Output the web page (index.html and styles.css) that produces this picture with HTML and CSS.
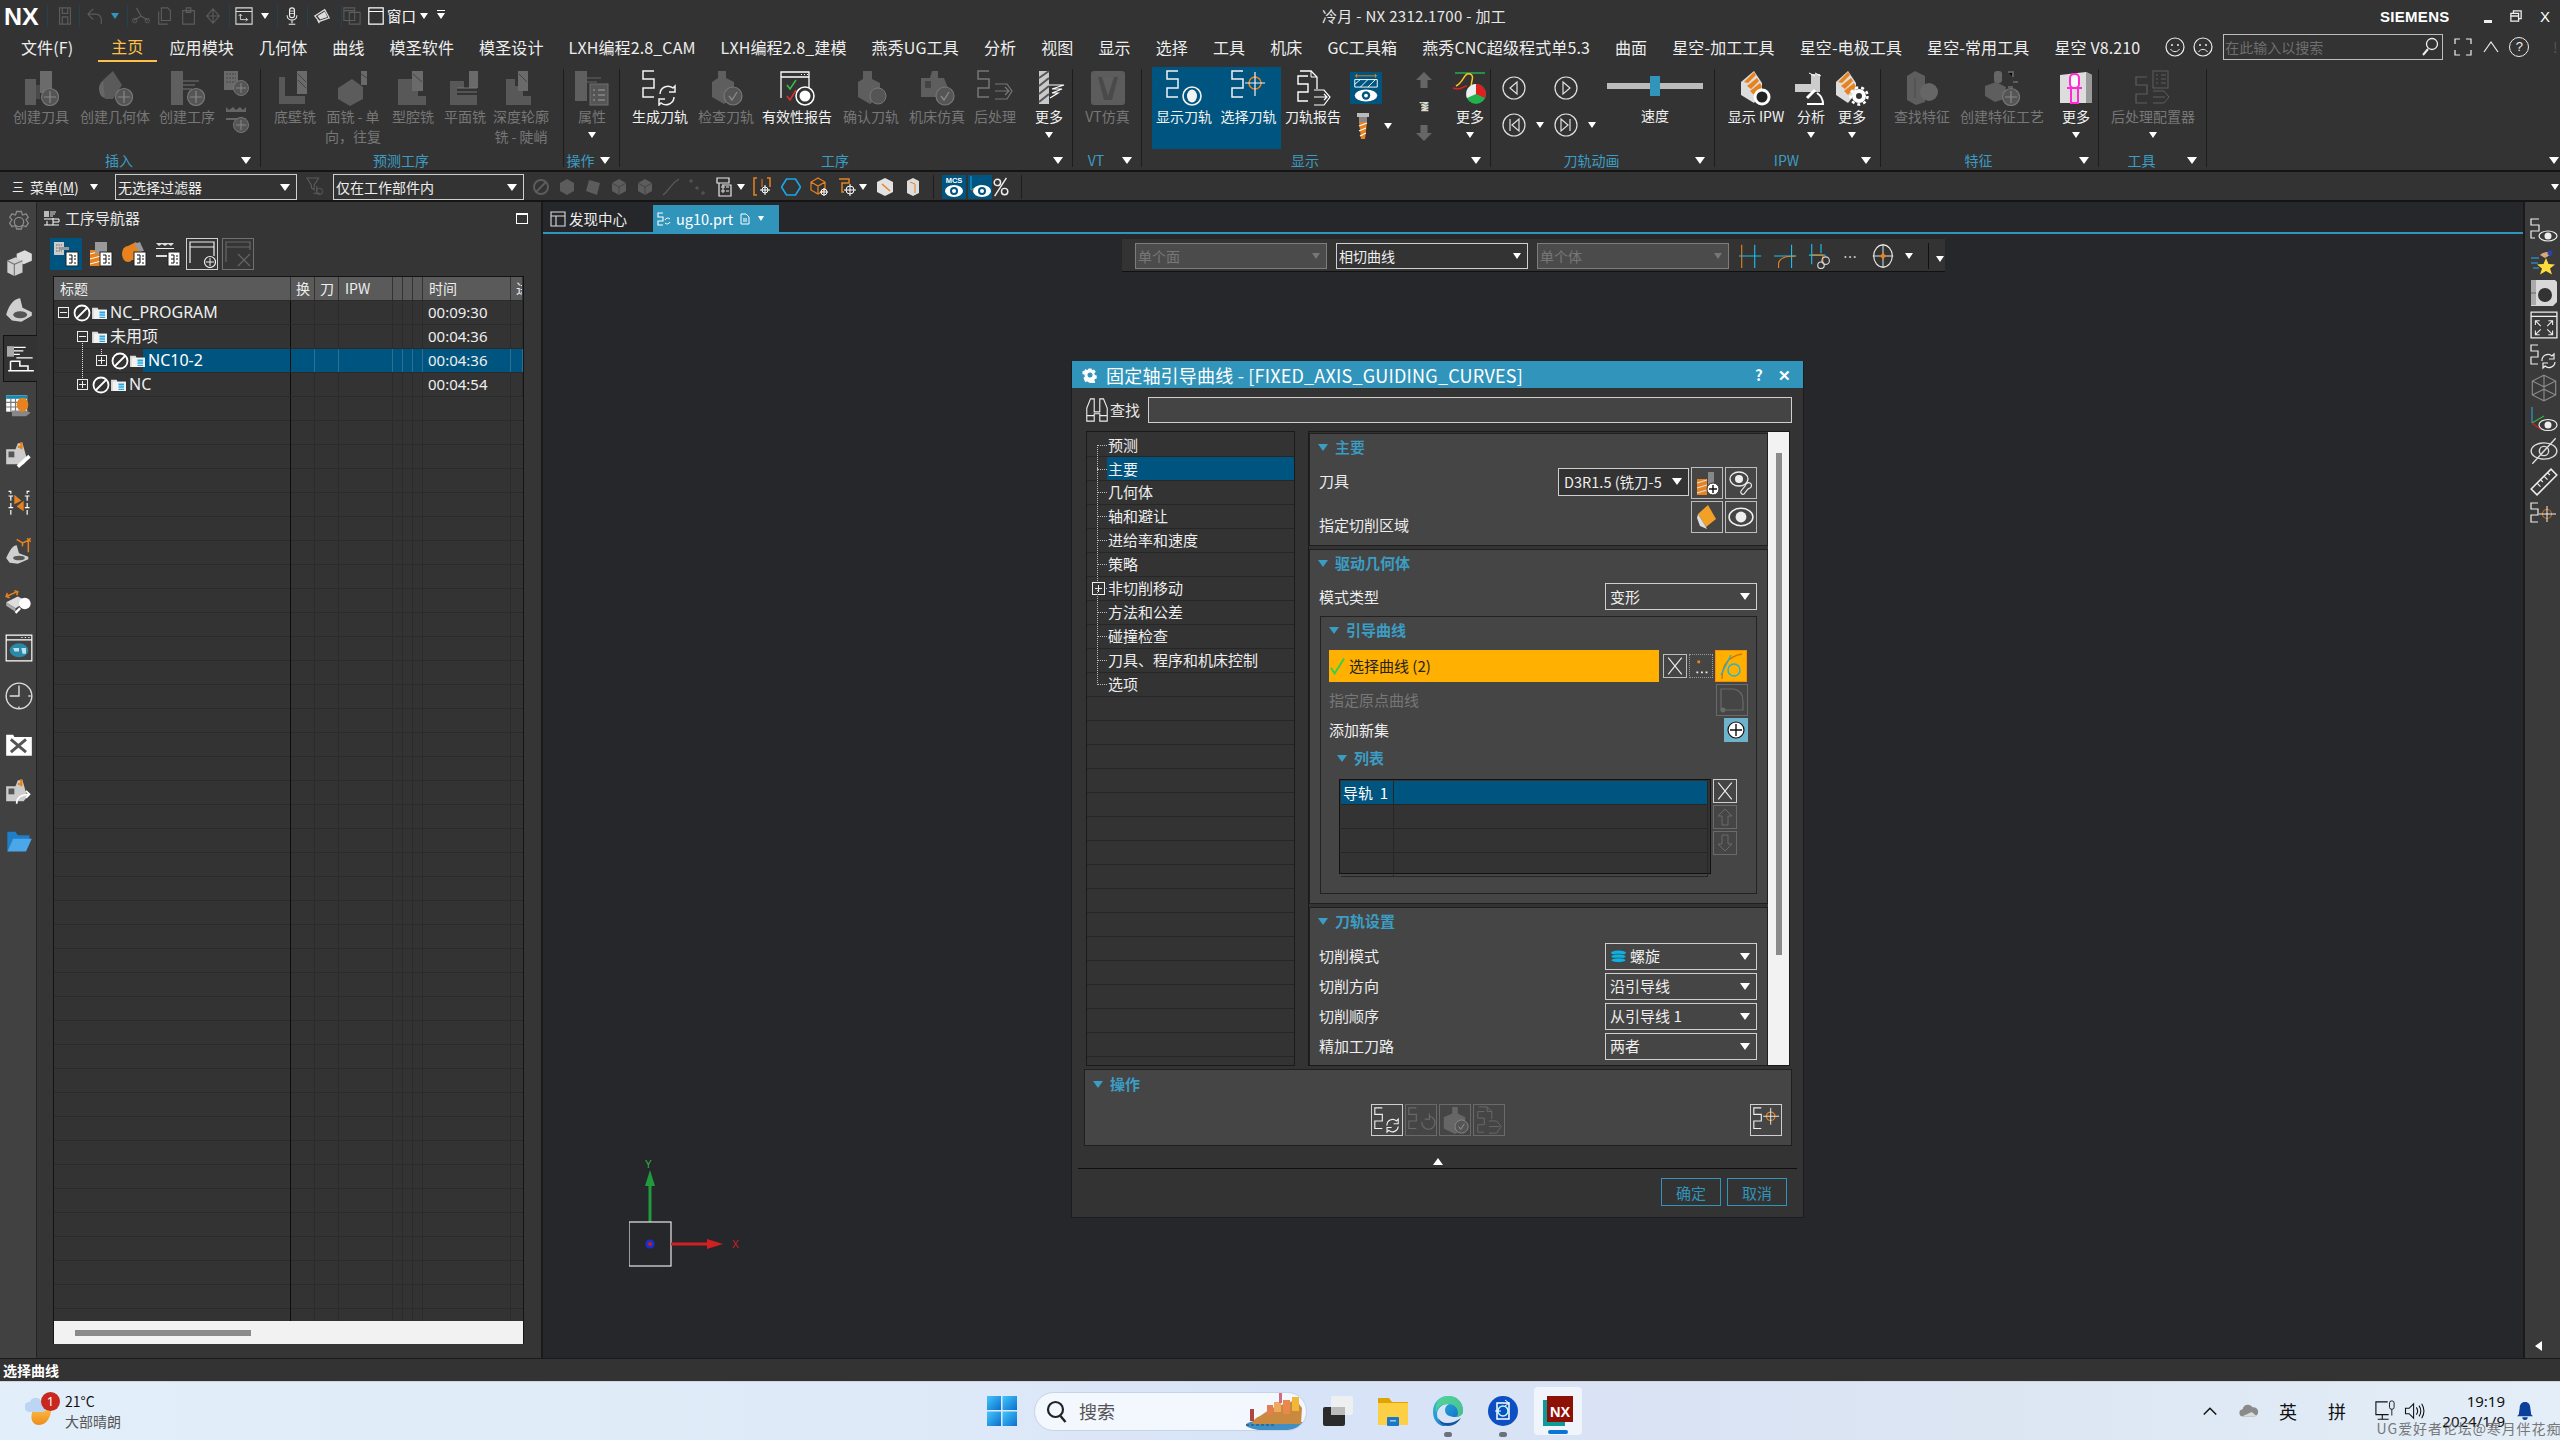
FILE: index.html
```html
<!DOCTYPE html>
<html lang="zh-CN">
<head>
<meta charset="utf-8">
<title>冷月 - NX 2312.1700 - 加工</title>
<link rel="stylesheet" href="styles.css">
</head>
<body>
<svg class="defs" xmlns="http://www.w3.org/2000/svg">
<defs>
<linearGradient id="win" x1="0" y1="0" x2="1" y2="1"><stop offset="0" stop-color="#45c6fb"/><stop offset="1" stop-color="#0a6fcf"/></linearGradient>
<linearGradient id="edge" x1="0" y1="0" x2="1" y2="1"><stop offset="0" stop-color="#36c2d8"/><stop offset=".6" stop-color="#1a86d0"/><stop offset="1" stop-color="#0f5fa8"/></linearGradient>
<linearGradient id="moon" x1="0" y1="0" x2="0" y2="1"><stop offset="0" stop-color="#fbc64a"/><stop offset="1" stop-color="#ef8a1c"/></linearGradient>
</defs>
<symbol id="plus" viewBox="0 0 36 36"><circle cx="27" cy="27" r="8.5" fill="#555" stroke="#777" stroke-width="1.2"/><path d="M27 21v12M21 27h12" stroke="#888" stroke-width="1.2"/></symbol>
<symbol id="snake" viewBox="0 0 36 36"><path d="M12 1H1v8h11v9H1v9h11" fill="none" stroke="currentColor" stroke-width="1.5"/></symbol>
<symbol id="refresh" viewBox="0 0 36 36"><path d="M18 24a8 8 0 0 1 13-6l2-2v6h-6M32 27a8 8 0 0 1-13 6l-2 2v-6h6" fill="none" stroke="currentColor" stroke-width="1.5"/></symbol>
<symbol id="eye" viewBox="0 0 36 36"><circle cx="26" cy="26" r="9" fill="none" stroke="currentColor" stroke-width="1.6"/><ellipse cx="26" cy="26" rx="5" ry="6.5" fill="currentColor"/></symbol>
<symbol id="target" viewBox="0 0 36 36"><circle cx="24" cy="13" r="6" fill="none" stroke="#e8821e" stroke-width="1.5"/><path d="M24 2v24M14 13h20" stroke="currentColor" stroke-width="1.2"/></symbol>
<symbol id="i-tool" viewBox="0 0 36 36"><rect x="2" y="9" width="11" height="26" fill="#5d5d5d"/><rect x="17" y="1" width="12" height="22" fill="#6b6b6b"/><path d="M13 15h4v14h-4z" fill="#4a4a4a"/><use href="#plus"/></symbol>
<symbol id="i-geom" viewBox="0 0 36 36"><ellipse cx="8" cy="19" rx="6" ry="9" fill="#666"/><path d="M6 10L16 1l9 14-9 14H8z" fill="#5a5a5a"/><use href="#plus"/></symbol>
<symbol id="i-oper" viewBox="0 0 36 36"><rect x="2" y="1" width="12" height="34" fill="#5f5f5f"/><path d="M14 11h16M14 15h12M14 19h9" stroke="#5f5f5f" stroke-width="1.4"/><use href="#plus"/></symbol>
<symbol id="i-mini1" viewBox="0 0 28 28"><rect x="1" y="1" width="14" height="19" fill="#6a6a6a"/><path d="M3 4h10M3 8h10M3 12h10" stroke="#444" stroke-dasharray="2 1"/><circle cx="18" cy="18" r="7.5" fill="#555" stroke="#777"/><path d="M18 13v10M13 18h10" stroke="#888"/></symbol>
<symbol id="i-mini2" viewBox="0 0 28 28"><path d="M3 1v5h20V1l-3 3-3-3-4 3-3-3-4 3zM3 12h20v2H3z" fill="#666"/><circle cx="18" cy="19" r="7.5" fill="#555" stroke="#777"/><path d="M18 14v10M13 19h10" stroke="#888"/></symbol>
<symbol id="i-wall" viewBox="0 0 36 36"><path d="M2 7h6v19h20v8H2z" fill="#585858"/><path d="M20 1h10v23H20z" fill="#6a6a6a"/><path d="M21 4l8 8M21 10l8 8" stroke="#444"/></symbol>
<symbol id="i-face" viewBox="0 0 36 36"><path d="M3 18L17 9l11 8v12L15 36 3 29z" fill="#5c5c5c"/><rect x="26" y="1" width="6" height="14" fill="#6a6a6a"/><path d="M26 4l6 4" stroke="#444"/></symbol>
<symbol id="i-cav" viewBox="0 0 36 36"><path d="M3 9h14v9h6v8h8v9H3z" fill="#585858"/><rect x="17" y="1" width="11" height="20" fill="#6a6a6a"/><path d="M18 4l9 8" stroke="#444"/></symbol>
<symbol id="i-plane" viewBox="0 0 36 36"><path d="M3 11h14v7h-7v7h20v10H3z" fill="#585858"/><rect x="22" y="1" width="9" height="17" fill="#6a6a6a"/><path d="M10 18h20M10 22h20" stroke="#777"/></symbol>
<symbol id="i-deep" viewBox="0 0 36 36"><path d="M3 9h9v7h8v10h8v9H3z" fill="#585858"/><rect x="15" y="1" width="10" height="20" fill="#6a6a6a"/><path d="M16 4l8 8" stroke="#444"/></symbol>
<symbol id="i-prop" viewBox="0 0 36 36"><rect x="1" y="1" width="12" height="30" fill="#5f5f5f"/><path d="M13 8h14M13 12h10" stroke="#666"/><rect x="16" y="14" width="18" height="21" fill="#555" stroke="#707070"/><path d="M19 20h2M24 20h7M19 25h2M24 25h7M19 30h2M24 30h7" stroke="#888" stroke-width="1.5"/></symbol>
<symbol id="i-gen" viewBox="0 0 36 36"><use href="#snake"/><use href="#refresh"/></symbol>
<symbol id="i-check" viewBox="0 0 36 36"><path d="M10 1h8v7l8 4v15l-10 7-12-7V12l6-4z" fill="#5e5e5e"/><circle cx="25" cy="26" r="9" fill="#555" stroke="#777" stroke-width="1.2"/><path d="M21 26l3 4 5-8" fill="none" stroke="#888" stroke-width="1.4"/></symbol>
<symbol id="i-valid" viewBox="0 0 36 36"><path d="M2 28V2h28v20M2 7h28" fill="none" stroke="#fff" stroke-width="1.3"/><path d="M22 4.500h1M25 4.500h1M28 4.500h1" stroke="#fff"/><path d="M8 15l3 4 6-9" fill="none" stroke="#34c24a" stroke-width="1.5"/><path d="M8 26l3 4 6-10" fill="none" stroke="#e03030" stroke-width="1.5"/><circle cx="26" cy="26" r="9" fill="#333" stroke="#fff" stroke-width="1.5"/><circle cx="26" cy="26" r="5.500" fill="#fff"/></symbol>
<symbol id="i-confirm" viewBox="0 0 36 36"><path d="M10 1h9v8l8 4v14l-10 7-12-7V12l5-3z" fill="#5e5e5e"/><circle cx="25" cy="26" r="8" fill="#555" stroke="#777"/></symbol>
<symbol id="i-mach" viewBox="0 0 36 36"><path d="M2 22V8h9l2-7h6v7h6l4 10-7 3v6H2z" fill="#5e5e5e"/><rect x="6" y="11" width="6" height="7" fill="#444"/><circle cx="26" cy="26" r="9" fill="#555" stroke="#777" stroke-width="1.2"/><path d="M22 26l3 4 5-8" fill="none" stroke="#888" stroke-width="1.4"/></symbol>
<symbol id="i-post" viewBox="0 0 36 36"><use href="#snake"/><path d="M18 14h12l5 7-5 8H18M18 21h14m-4-4l4 4-4 4" fill="none" stroke="currentColor" stroke-width="1.2"/></symbol>
<symbol id="i-more1" viewBox="0 0 36 36"><rect x="8" y="1" width="10" height="33" fill="#c9c9c9"/><path d="M8 8l10-7M8 16L18 8M8 24l10-8M8 32l10-8" stroke="#555" stroke-width="2"/><path d="M18 15h15l-12 4h10l-10 4h6l-8 5" fill="none" stroke="#fff" stroke-width="1.2"/></symbol>
<symbol id="i-vt" viewBox="0 0 36 36"><rect x="1" y="1" width="34" height="34" rx="3" fill="#5c5c5c"/><path d="M8 7h20l-6 23h-8z" fill="#4a4a4a"/><path d="M12 7h12l-6 19z" fill="#5e5e5e"/></symbol>
<symbol id="i-show" viewBox="0 0 36 36"><use href="#snake"/><use href="#eye"/></symbol>
<symbol id="i-sel" viewBox="0 0 36 36"><use href="#snake"/><use href="#target"/></symbol>
<symbol id="i-rep" viewBox="0 0 36 36"><path d="M5 1h11l6 6v12" fill="none" stroke="#fff" stroke-width="1.3"/><path d="M16 1v6h6" fill="none" stroke="#fff"/><path d="M13 6H3v8h10v8H3v9h10" fill="none" stroke="#fff" stroke-width="1.4"/><path d="M19 20h10l6 7-6 8H19M19 27h13m-3-3l3 3-3 3" fill="none" stroke="#fff" stroke-width="1.2"/></symbol>
<symbol id="i-stepeye" viewBox="0 0 32 32"><path d="M4 3h24M6 1v4M26 1v4" stroke="#e8821e"/><path d="M4 7h24v8H4zM4 12l6-5M10 15l8-8M18 15l8-8" fill="none" stroke="#fff"/><ellipse cx="16" cy="24" rx="12" ry="6.500" fill="#fff"/><circle cx="16" cy="24" r="4.500" fill="#005580"/><circle cx="16" cy="24" r="2" fill="#fff"/></symbol>
<symbol id="i-endmill" viewBox="0 0 20 26"><rect x="4" y="0" width="12" height="4" fill="#bbb"/><rect x="6" y="4" width="8" height="5" fill="#888"/><path d="M6 9h8l-2 17H8z" fill="#e8821e"/><path d="M6 13l8-3M6 18l7-3M7 23l6-3" stroke="#fff" stroke-width="1.2"/></symbol>
<symbol id="i-up" viewBox="0 0 20 18"><path d="M10 0l9 9h-5v9H6V9H1z" fill="#666"/></symbol>
<symbol id="i-down" viewBox="0 0 20 18"><path d="M10 18l9-9h-5V0H6v9H1z" fill="#666"/></symbol>
<symbol id="i-spiral" viewBox="0 0 16 16"><path d="M3 3h10l-8 3h8l-8 3h8l-8 3h8" fill="none" stroke="#ddd" stroke-width="1.6"/><path d="M5 6l6 3" stroke="#e8a01e"/><path d="M5 3l6 3" stroke="#2a9"/></symbol>
<symbol id="i-color" viewBox="0 0 36 36"><path d="M3 3h30" stroke="#22b14c" stroke-width="1.5"/><path d="M4 16c8-4 8-14 14-12s-1 10 2 14" fill="none" stroke="#ffc21e" stroke-width="1.5"/><path d="M1 18c8 3 10-2 14-2" fill="none" stroke="#e02020" stroke-width="1.5"/><circle cx="24" cy="24" r="10" fill="#22b14c"/><path d="M24 24V14a10 10 0 0 1 9 14z" fill="#e02020"/><path d="M24 24l-9 4a10 10 0 0 1 9-14z" fill="#eee"/></symbol>
<symbol id="i-cprev" viewBox="0 0 24 24"><circle cx="12" cy="12" r="11" fill="none" stroke="#e0e0e0" stroke-width="1.2"/><path d="M15 6L8 12l7 6z" fill="none" stroke="#e0e0e0" stroke-width="1.2"/></symbol>
<symbol id="i-cnext" viewBox="0 0 24 24"><circle cx="12" cy="12" r="11" fill="none" stroke="#e0e0e0" stroke-width="1.2"/><path d="M9 6l7 6-7 6z" fill="none" stroke="#e0e0e0" stroke-width="1.2"/></symbol>
<symbol id="i-cfirst" viewBox="0 0 24 24"><circle cx="12" cy="12" r="11" fill="none" stroke="#e0e0e0" stroke-width="1.2"/><path d="M8 6v12M17 6l-7 6 7 6z" fill="none" stroke="#e0e0e0" stroke-width="1.2"/></symbol>
<symbol id="i-clast" viewBox="0 0 24 24"><circle cx="12" cy="12" r="11" fill="none" stroke="#e0e0e0" stroke-width="1.2"/><path d="M16 6v12M7 6l7 6-7 6z" fill="none" stroke="#e0e0e0" stroke-width="1.2"/></symbol>
<symbol id="i-ipw" viewBox="0 0 36 36"><path d="M3 12L16 1l8 12v10l-8 10-13-8z" fill="#ddd"/><path d="M6 12L16 2l2 3-8 8zM9 16l10-8 2 3-8 8zM12 21l10-8 2 4-8 8z" fill="#e8821e"/><circle cx="24" cy="27" r="7" fill="#222" stroke="#fff" stroke-width="3"/></symbol>
<symbol id="i-anal" viewBox="0 0 36 36"><path d="M2 14h16V4h9v18H2z" fill="#ccc"/><path d="M16 3l6 3m0-3l6 3" stroke="#fff"/><path d="M22 20l-8 8" stroke="#fff" stroke-width="3"/><path d="M14 34h16c0-6-3-9-6-11" fill="none" stroke="#fff" stroke-width="2"/></symbol>
<symbol id="i-ipwg" viewBox="0 0 36 36"><path d="M2 12L14 1l8 12v10l-8 10-12-8z" fill="#ddd"/><path d="M4 12L14 2l2 3-8 8zM7 16l10-8 2 3-8 8zM10 21l10-8 2 4-8 8z" fill="#e8821e"/><circle cx="25" cy="26" r="5" fill="none" stroke="#fff" stroke-width="4"/><circle cx="25" cy="26" r="8.500" fill="none" stroke="#fff" stroke-width="2.500" stroke-dasharray="3 3"/></symbol>
<symbol id="i-find" viewBox="0 0 36 36"><path d="M3 6l8-5 10 5v26l-9 3-9-5z" fill="#5e5e5e"/><circle cx="25" cy="22" r="9" fill="#666"/><path d="M11 8v20" stroke="#4a4a4a"/></symbol>
<symbol id="i-feat" viewBox="0 0 36 36"><rect x="10" y="1" width="8" height="12" rx="3" fill="#666"/><path d="M1 16l11-4 10 5-2 12-9 3-10-6z" fill="#5e5e5e"/><path d="M24 2h5v5M29 12h5M24 17h5" stroke="#5e5e5e" stroke-width="2"/><use href="#plus"/></symbol>
<symbol id="i-featm" viewBox="0 0 36 36"><path d="M2 5l26-3 6 3v28H2z" fill="#ddd"/><path d="M28 2v31h6V5z" fill="#999"/><rect x="12" y="4" width="9" height="14" rx="4" fill="#f8f8f8" stroke="#ff2ad4" stroke-width="2"/><path d="M9 18h15M13 18v15h7V18" fill="none" stroke="#ff2ad4" stroke-width="2"/></symbol>
<symbol id="i-postc" viewBox="0 0 36 36"><path d="M12 1H1v8h11v9H1v9h11" transform="translate(0 6)" fill="none" stroke="#5e5e5e" stroke-width="1.2"/><rect x="18" y="1" width="15" height="17" fill="none" stroke="#5e5e5e"/><path d="M21 5h2M26 5h5M21 9h2M26 9h5M21 13h2M26 13h5" stroke="#5e5e5e"/><path d="M18 21h11l5 6-5 6H18M18 27h12" fill="none" stroke="#5e5e5e"/></symbol>
<symbol id="q-save" viewBox="0 0 20 20"><path d="M4 1h12v18H4zM7 1v6h6V1M7 19v-8h6v8" fill="none" stroke="#5c5c5c" stroke-width="1.3"/></symbol>
<symbol id="q-undo" viewBox="0 0 20 20"><path d="M2 8l6-6M2 8l6 6M2 8h9a6 6 0 0 1 6 6v5" fill="none" stroke="#5c5c5c" stroke-width="1.3"/></symbol>
<symbol id="q-cut" viewBox="0 0 20 20"><path d="M10 10L5 1M10 10l8 5M10 10L2 15" fill="none" stroke="#5c5c5c" stroke-width="1.3"/><circle cx="3" cy="15" r="2.500" fill="none" stroke="#5c5c5c"/><circle cx="17" cy="15" r="2.500" fill="none" stroke="#5c5c5c"/></symbol>
<symbol id="q-copy" viewBox="0 0 20 20"><path d="M6 1h7l3 3v11H6zM3 5v14h10" fill="none" stroke="#5c5c5c" stroke-width="1.3"/></symbol>
<symbol id="q-paste" viewBox="0 0 20 20"><path d="M3 4h13v15H3zM7 1h5v5H7z" fill="none" stroke="#5c5c5c" stroke-width="1.3"/></symbol>
<symbol id="q-del" viewBox="0 0 20 20"><path d="M3 10l7-8 7 8-7 8zM10 2v16M3 10h14" fill="none" stroke="#5c5c5c" stroke-width="1.2"/></symbol>
<symbol id="q-mode" viewBox="0 0 20 20"><path d="M1 1h18v18H1zM1 5h18" fill="none" stroke="#ddd" stroke-width="1.2"/><path d="M6 8v6h8m-2-2l2 2-2 2M4 10l2-2 2 2" fill="none" stroke="#ddd"/></symbol>
<symbol id="q-mic" viewBox="0 0 20 22"><rect x="7" y="1" width="6" height="12" rx="3" fill="none" stroke="#eee" stroke-width="1.4"/><path d="M7 5h6M7 8h6" stroke="#eee"/><path d="M4 10c0 8 12 8 12 0M10 16v4M6 21h8" fill="none" stroke="#eee" stroke-width="1.3"/></symbol>
<symbol id="q-cast" viewBox="0 0 20 20"><path d="M2 10l11-7 5 9-11 4zM5 14l2 4" fill="none" stroke="#ddd" stroke-width="1.4"/><path d="M5 10l8-5 3 6-8 3z" fill="#ddd"/></symbol>
<symbol id="q-wins" viewBox="0 0 20 20"><path d="M1 1h12v14H1zM1 4h12M7 6h12v13H7z" fill="none" stroke="#5c5c5c" stroke-width="1.2"/></symbol>
<symbol id="q-win" viewBox="0 0 18 20"><path d="M1 1h16v18H1zM1 5h16" fill="none" stroke="#fff" stroke-width="1.3"/></symbol>
<symbol id="s-funnel" viewBox="0 0 20 22"><path d="M1 1h13L9 9v5L6 12V9zM12 10v8M8 18h8" fill="none" stroke="#5c5c5c" stroke-width="1.2"/><circle cx="15" cy="16" r="3.500" fill="none" stroke="#5c5c5c"/></symbol>
<symbol id="s-no" viewBox="0 0 18 18"><circle cx="9" cy="9" r="7" fill="none" stroke="#5c5c5c" stroke-width="2"/><path d="M4 14L14 4" stroke="#5c5c5c" stroke-width="2"/></symbol>
<symbol id="s-hex" viewBox="0 0 18 18"><path d="M9 1l7 4v8l-7 4-7-4V5z" fill="#5c5c5c"/></symbol>
<symbol id="s-face" viewBox="0 0 18 18"><path d="M5 2l11 3-3 12-11-4z" fill="#5c5c5c"/></symbol>
<symbol id="s-hex2" viewBox="0 0 18 18"><path d="M9 1l7 4v8l-7 4-7-4V5z" fill="#5c5c5c"/><path d="M2 5l7 4 7-4M9 9v8" stroke="#444" fill="none"/></symbol>
<symbol id="s-curve" viewBox="0 0 18 18"><path d="M1 17C8 12 8 6 17 1" fill="none" stroke="#5c5c5c" stroke-width="1.2"/></symbol>
<symbol id="s-pts" viewBox="0 0 18 18"><path d="M3 1v4M1 3h4M9 8v4M7 10h4M15 13v4M13 15h4" stroke="#5c5c5c"/></symbol>
<symbol id="s-filt" viewBox="0 0 20 20"><path d="M3 1h12v5H3zM5 6v13h12V8H8" fill="none" stroke="#e8e8e8" stroke-width="1.2"/><path d="M8 9h2v2H8zM8 13h2v2H8zM12 10h3M12 14h3" stroke="#e8e8e8"/></symbol>
<symbol id="s-or1" viewBox="0 0 20 20"><path d="M4 1H1v17h3M14 1h3v9" fill="none" stroke="#e8821e" stroke-width="1.5"/><path d="M9 2v8" stroke="#e8821e"/><circle cx="12" cy="13" r="3" fill="none" stroke="#fff"/><path d="M12 8v10M7 13h10" stroke="#fff"/></symbol>
<symbol id="s-hexc" viewBox="0 0 20 20"><path d="M5.500 2h9l5 8-5 8h-9l-5-8z" fill="none" stroke="#19a8e8" stroke-width="1.6"/></symbol>
<symbol id="s-cube" viewBox="0 0 20 20"><path d="M9 1l7 4v8l-7 4-7-4V5zM2 5l7 4 7-4M9 9v8" fill="none" stroke="#e8821e" stroke-width="1.2"/><path d="M15 11v8M11 15h8" stroke="#fff"/><circle cx="15" cy="15" r="3" fill="none" stroke="#fff"/></symbol>
<symbol id="s-box" viewBox="0 0 20 20"><path d="M2 2h10v4h-7v9h2" fill="none" stroke="#e8821e" stroke-width="1.5"/><circle cx="13" cy="13" r="4" fill="none" stroke="#fff"/><path d="M13 7v12M7 13h12" stroke="#fff"/></symbol>
<symbol id="s-b1" viewBox="0 0 20 20"><path d="M10 1l8 4v10l-8 4-8-4V5z" fill="#e2e2e2"/><path d="M7 7l8 7" stroke="#e8821e" stroke-width="1.5"/></symbol>
<symbol id="s-b2" viewBox="0 0 20 20"><path d="M10 1l6 3v12l-6 3-6-3V4z" fill="#ddd"/><path d="M7 5l5 2v9" fill="none" stroke="#e8821e"/></symbol>
<symbol id="s-wcs" viewBox="0 0 24 24"><path d="M3 1v14" stroke="#19a8e8"/><path d="M3 15l10-5" stroke="#2fc24a"/><path d="M3 15l5 4" stroke="#e02020"/><ellipse cx="14" cy="16" rx="9" ry="6" fill="#fff"/><circle cx="14" cy="16" r="4" fill="#005580"/><circle cx="14" cy="16" r="2" fill="#fff"/></symbol>
<symbol id="s-pct" viewBox="0 0 20 22"><circle cx="6" cy="6" r="3.500" fill="none" stroke="#eee" stroke-width="1.6"/><circle cx="14" cy="16" r="3.500" fill="none" stroke="#eee" stroke-width="1.6"/><path d="M16 1L3 21" stroke="#eee" stroke-width="1.6"/></symbol>
<symbol id="n-sel1" viewBox="0 0 26 26"><rect x="1" y="1" width="10" height="13" fill="#ccc"/><path d="M3 4h6M3 7h6M3 10h6" stroke="#666" stroke-dasharray="1.500 1"/><rect x="6" y="6" width="10" height="3" fill="#999"/><rect x="13" y="11" width="12" height="14" fill="#fff" stroke="#222"/><path d="M16 14h3v8M16 18h3M16 22h3M21 15h2M21 18h2M21 22h2" fill="none" stroke="#111"/></symbol>
<symbol id="n-sel2" viewBox="0 0 26 26"><path d="M3 9h11v16H3z" fill="#e8821e"/><path d="M3 13l11-3M3 18l11-3M3 23l11-3" stroke="#fff"/><rect x="8" y="1" width="12" height="12" fill="#999"/><rect x="13" y="11" width="12" height="14" fill="#fff" stroke="#222"/><path d="M16 14h3v8M16 18h3M16 22h3M21 15h2M21 18h2M21 22h2" fill="none" stroke="#111"/></symbol>
<symbol id="n-sel3" viewBox="0 0 26 26"><ellipse cx="7" cy="13" rx="6" ry="8" fill="#e8821e"/><path d="M7 5l8-4 6 10-6 8H7z" fill="#e8821e"/><path d="M13 3l6-2 4 9-5 1z" fill="#999"/><rect x="13" y="11" width="12" height="14" fill="#fff" stroke="#222"/><path d="M16 14h3v8M16 18h3M16 22h3M21 15h2M21 18h2M21 22h2" fill="none" stroke="#111"/></symbol>
<symbol id="n-sel4" viewBox="0 0 26 26"><path d="M1 2h18l-3 3-3-2-3 2-3-2-3 2zM1 14h11v2H1z" fill="#ddd"/><path d="M1 7h18v1H1z" fill="#eee"/><rect x="13" y="11" width="12" height="14" fill="#fff" stroke="#222"/><path d="M16 14h3v8M16 18h3M16 22h3M21 15h2M21 18h2M21 22h2" fill="none" stroke="#111"/></symbol>
<symbol id="n-add" viewBox="0 0 28 28"><path d="M2 23V2h24v14M2 7h24" fill="none" stroke="currentColor" stroke-width="1.2"/><circle cx="22" cy="22" r="5.500" fill="none" stroke="currentColor" stroke-width="1.2"/><path d="M22 18v8M18 22h8" stroke="currentColor"/></symbol>
<symbol id="n-del" viewBox="0 0 28 28"><path d="M2 22V2h24v8M2 7h24" fill="none" stroke="currentColor" stroke-width="1.2"/><path d="M14 14l12 12m0-12L14 26" stroke="currentColor" stroke-width="1.2"/></symbol>
<symbol id="t-folder" viewBox="0 0 16 14"><path d="M0 2h6l1 2h9v10H0z" fill="#ddd"/><path d="M2 4h14v10H2z" fill="#f2f2f2"/><path d="M8 6h6v2H8zM8 9h6v1.500H8zM8 11.500h6V13H8z" fill="#22a7e0"/></symbol>
<symbol id="t-no" viewBox="0 0 18 18"><circle cx="9" cy="9" r="7.500" fill="none" stroke="#fff" stroke-width="1.8"/><path d="M4 14L14 4" stroke="#fff" stroke-width="1.8"/></symbol>
<symbol id="t-nav" viewBox="0 0 16 16"><rect x="0" y="1" width="5" height="6" fill="#bbb"/><path d="M6 2h6M6 4h5M6 6h3" stroke="#ddd"/><path d="M0 9h15v3h-6V8M0 15h15M3 11v4M9 12v3" fill="none" stroke="#fff"/></symbol>
<symbol id="t-home" viewBox="0 0 16 16"><path d="M1 1h14v14H1zM1 5h14M6 5v10" fill="none" stroke="#ddd" stroke-width="1.100"/></symbol>
<symbol id="t-ug" viewBox="0 0 14 14"><path d="M6 1H1v4h5v4H1v4h5" fill="none" stroke="#fff" stroke-width="1.100"/><path d="M8 8a3 3 0 0 1 5-1M13 10a3 3 0 0 1-5 1" fill="none" stroke="#fff"/></symbol>
<symbol id="t-doc" viewBox="0 0 10 12"><path d="M1 1h5l3 3v7H1zM3 6h4M3 8h4" fill="none" stroke="#fff"/></symbol>
<symbol id="r-gear" viewBox="0 0 24 24"><circle cx="12" cy="12" r="4" fill="none" stroke="#8a8a8a" stroke-width="1.1"/><path d="M10 2h4l1 3 3-1 2 3-2 2 2 3-2 3-3-1-1 3h-4l-1-3-3 1-2-3 2-3-2-2 2-3 3 1z" transform="translate(0 1)" fill="none" stroke="#8a8a8a" stroke-width="1.1"/></symbol>
<symbol id="r-blocks" viewBox="0 0 24 24"><path d="M10 5l7-3 6 3v6l-7 3-6-3z" fill="#ddd"/><path d="M2 11l7-3 6 3v10l-7 3-6-3z" fill="#cfcfcf"/><path d="M2 11l6 3 7-3M8 14v10" stroke="#777" fill="none"/></symbol>
<symbol id="r-seat" viewBox="0 0 24 24"><path d="M1 16C4 6 9 2 13 2l2 8 8 4v3l-9 5-8-1z" fill="#cfcfcf"/><ellipse cx="13" cy="16" rx="6" ry="3" fill="#555"/></symbol>
<symbol id="r-nav" viewBox="0 0 24 24"><rect x="0" y="1" width="6" height="9" fill="#aaa"/><path d="M6 2h10M6 5h8M6 8h5M8 11h14" stroke="#fff"/><path d="M3 14h8v4h7v4h5M1 22h20M3 14v8" fill="none" stroke="#fff" stroke-width="1.3"/></symbol>
<symbol id="r-tab" viewBox="0 0 24 24"><rect x="1" y="2" width="18" height="14" fill="#fff"/><rect x="1" y="2" width="18" height="3" fill="#168bb0"/><path d="M5 5v11M9 5v11M1 8h18M1 12h18" stroke="#777"/><path d="M6 20h12l4-3-4-2H6z" fill="#888"/><ellipse cx="15" cy="10" rx="5" ry="6" fill="#e8821e"/></symbol>
<symbol id="r-mach" viewBox="0 0 24 24"><path d="M1 20V7h8l2-5h4l4 14-3 4z" fill="#ccc"/><rect x="3" y="9" width="5" height="5" fill="#555"/><path d="M11 5h4" stroke="#e8821e" stroke-width="2"/><path d="M14 1v6" stroke="#e8821e" stroke-width="2"/><path d="M11 22l10-9" stroke="#fff" stroke-width="3"/></symbol>
<symbol id="r-tree" viewBox="0 0 24 24"><path d="M3 2h2v20H3M3 6h4M3 16h4M21 2h-2v20h2M21 6h-4M21 16h-4" fill="none" stroke="#fff" stroke-dasharray="4 2"/><path d="M8 5l6 5-6 3zM16 10l-6 5 6 4z" fill="#e8821e"/></symbol>
<symbol id="r-seat2" viewBox="0 0 24 24"><path d="M1 18c3-7 6-11 9-11l2 7 8 3v2l-9 4-7-1z" fill="#cfcfcf"/><ellipse cx="12" cy="18" rx="5" ry="2" fill="#555"/><path d="M10 2l5 3 5-2M20 3v10M15 5v3M19 1l3 3m0-3l-3 3" fill="none" stroke="#e8821e" stroke-width="1.3"/></symbol>
<symbol id="r-mag" viewBox="0 0 24 24"><path d="M1 14l10-5 8 4-10 6z" fill="#ddd"/><path d="M1 14v3l8 5v-3z" fill="#aaa"/><circle cx="17" cy="15" r="5" fill="#fff"/><path d="M13 19l-4 4" stroke="#fff" stroke-width="2"/><path d="M1 9l9-4m-2-1l3 1-1 3M2 6l-1 3 3 1" fill="none" stroke="#e8821e" stroke-width="1.3"/></symbol>
<symbol id="r-globe" viewBox="0 0 24 24"><path d="M1 1h22v22H1zM1 5h22" fill="none" stroke="#fff"/><path d="M14 3h1M17 3h1M20 3h1" stroke="#fff"/><ellipse cx="12" cy="14" rx="8" ry="6" fill="#2a88a8"/><path d="M7 12h5v3H8zM14 12h4v5h-3z" fill="#bcdfe8"/></symbol>
<symbol id="r-clock" viewBox="0 0 24 24"><circle cx="12" cy="12" r="11" fill="none" stroke="#ddd" stroke-width="1.2"/><path d="M12 3v9H4M12 21v2M22 12h-2" fill="none" stroke="#ddd" stroke-width="1.2"/></symbol>
<symbol id="r-tools" viewBox="0 0 24 24"><path d="M1 4h6l1 2h15v16H1z" fill="#fff"/><path d="M5 8l13 11M18 8L5 19" stroke="#555" stroke-width="2.500"/></symbol>
<symbol id="r-mach2" viewBox="0 0 24 24"><path d="M1 20V7h8l2-5h4l4 14-3 4z" fill="#ccc"/><rect x="3" y="9" width="5" height="5" fill="#555"/><path d="M11 5h4M14 1v6" stroke="#e8821e" stroke-width="2"/><path d="M10 22c0-5 4-8 11-8m-3-3l3 3-3 3" fill="none" stroke="#fff" stroke-width="1.500"/></symbol>
<symbol id="r-folder" viewBox="0 0 24 24"><path d="M2 21V4h7l2 3h10v4H7z" fill="#1e7ec8"/><path d="M2 21l5-11h16l-5 11z" fill="#4aa7ea"/></symbol>
<symbol id="g-snake-eye" viewBox="0 0 28 24"><path d="M9 1H1v6h8v6H1v7h4" fill="none" stroke="#eee" stroke-width="1.2"/><ellipse cx="18" cy="18" rx="9" ry="5" fill="none" stroke="#eee" stroke-width="1.2"/><circle cx="18" cy="18" r="3.500" fill="#eee"/></symbol>
<symbol id="g-star" viewBox="0 0 28 24"><path d="M1 8h8M1 13h7M3 18h6" stroke="#2a88b8" stroke-width="1.3"/><path d="M16 8l2.500 6 6.500.5-5 4 2 6-6-3.500-6 3.500 2-6-5-4 6.500-.5z" fill="#ffdc3a"/><path d="M10 5c3-3 6-3 9-3l1 3-5 3z" fill="#d9a878"/><circle cx="20" cy="3" r="2.500" fill="#3040b0"/></symbol>
<symbol id="g-hole" viewBox="0 0 28 28"><path d="M1 1h24l2 2v20l-4 4H1z" fill="#d8d8d8"/><path d="M1 1h5v25H1z" fill="#aaa"/><path d="M1 14h5" stroke="#666"/><circle cx="15" cy="16" r="7" fill="#333"/></symbol>
<symbol id="g-expand" viewBox="0 0 26 26"><path d="M1 1h24v24H1zM1 5h24" fill="none" stroke="#eee" stroke-width="1.2"/><path d="M5 9l5 5m-5-1V9h4M21 9l-5 5m5-1V9h-4M5 22l5-5m-5 1v4h4M21 22l-5-5m5 1v4h-4" fill="none" stroke="#eee"/></symbol>
<symbol id="g-snake-ref" viewBox="0 0 28 24"><path d="M8 1H1v6h7v6H1v7h7" fill="none" stroke="#eee" stroke-width="1.2"/><path d="M12 17a6 6 0 0 1 10-5l2-2v5h-5M25 18a6 6 0 0 1-10 4l-2 2v-5h5" fill="none" stroke="#eee" stroke-width="1.2"/></symbol>
<symbol id="g-wire" viewBox="0 0 24 24"><path d="M12 1l10 5v12l-10 5L2 18V6zM2 6l10 5 10-5M12 11v12M2 18l10-5 10 5M12 1v12" fill="none" stroke="#8a8a8a"/></symbol>
<symbol id="g-axes" viewBox="0 0 28 26"><path d="M2 1v16" stroke="#2a9cc8" stroke-width="1.2"/><path d="M2 17l12-7" stroke="#2fb84a" stroke-width="1.2"/><path d="M2 17l8 6" stroke="#d02020" stroke-width="1.2"/><ellipse cx="18" cy="19" rx="9" ry="5.500" fill="none" stroke="#eee" stroke-width="1.2"/><circle cx="18" cy="19" r="3.500" fill="#eee"/></symbol>
<symbol id="g-eyeoff" viewBox="0 0 24 24"><ellipse cx="12" cy="12" rx="11" ry="7" fill="none" stroke="#ddd" stroke-width="1.2"/><circle cx="12" cy="12" r="4" fill="none" stroke="#ddd" stroke-width="1.2"/><path d="M2 23L22 1" stroke="#ddd" stroke-width="1.2"/></symbol>
<symbol id="g-ruler" viewBox="0 0 24 24"><path d="M1 18L18 1l5 5L6 23z" fill="none" stroke="#eee" stroke-width="1.3"/><path d="M6 13l3 3M9 10l2 2M12 7l3 3M15 4l2 2" stroke="#eee"/></symbol>
<symbol id="g-snake-t" viewBox="0 0 28 24"><path d="M8 1H1v6h7v6H1v7h7" fill="none" stroke="#eee" stroke-width="1.2"/><circle cx="17" cy="12" r="4.500" fill="none" stroke="#c96a10" stroke-width="1.2"/><path d="M17 4v16M9 12h17" stroke="#eee"/></symbol>
<symbol id="v-cross1" viewBox="0 0 28 26"><path d="M4 1v25" stroke="#e8821e" stroke-width="1.2"/><path d="M18 1v25M1 13h24" stroke="#19c0f0" stroke-width="1.2"/></symbol>
<symbol id="v-cross2" viewBox="0 0 28 26"><path d="M20 1v25M1 13h24" stroke="#19c0f0" stroke-width="1.2"/><path d="M6 26V22q0-9 18-9" stroke="#e8821e" stroke-width="1.2" fill="none"/></symbol>
<symbol id="v-cross3" viewBox="0 0 28 28"><path d="M4 1v22M14 1v10M1 13h18" stroke="#19c0f0" stroke-width="1.2"/><path d="M4 13h12v8" stroke="#e8821e" stroke-width="1.2" fill="none"/><circle cx="19" cy="19" r="4" fill="none" stroke="#ddd" stroke-width="1.2"/><circle cx="14" cy="24" r="3.500" fill="none" stroke="#ddd" stroke-width="1.2"/></symbol>
<symbol id="v-orient" viewBox="0 0 24 28"><ellipse cx="12" cy="14" rx="10" ry="12" fill="none" stroke="#eee" stroke-width="1.2"/><path d="M12 1v26M1 14h22" stroke="#eee" stroke-width="1"/><path d="M12 10l3 4-3 4-3-4z" fill="#e8821e"/></symbol>
<symbol id="d-gear" viewBox="0 0 16 16"><path d="M6.500 1h3l.5 2 2-1 2 2.500-1.500 1.500.5 2 2 .5v3l-2 .5-.5 1.500 1 2-2.500 2-1.500-1.500-2 .5-.5-1H6l-1-1-2 1L1 11l1.500-1.500L2 7.500 0 7V4l2-.5 1-2L5 3z" transform="scale(.95) translate(.5 .5)" fill="#fff"/><circle cx="8" cy="8" r="2.500" fill="#3195bb"/></symbol>
<symbol id="d-bino" viewBox="0 0 26 28"><path d="M2 26V12L6 2h4v14h6V2h4l4 10v14h-8V18h-6v8zM2 20h8M16 20h8" fill="none" stroke="#eee" stroke-width="1.2"/></symbol>
<symbol id="d-tooladd" viewBox="0 0 26 26"><path d="M3 9h10v16H3z" fill="#e8821e"/><path d="M3 13l10-3M3 18l10-3M3 23l10-3" stroke="#ddd" stroke-width="1.2"/><rect x="14" y="2" width="6" height="13" fill="#888"/><circle cx="19" cy="19" r="6" fill="#fff" stroke="#333"/><path d="M19 15v8M15 19h8" stroke="#111" stroke-width="1.4"/></symbol>
<symbol id="d-toolshow" viewBox="0 0 26 26"><ellipse cx="11" cy="9" rx="9" ry="7" fill="none" stroke="#eee" stroke-width="1.3"/><circle cx="11" cy="9" r="4" fill="#eee"/><path d="M22 13c2 1 2 4 0 5l-2 1-4 5c-2 1-4-1-3-3l4-5c0-2 3-4 5-3z" fill="none" stroke="#eee" stroke-width="1.2"/></symbol>
<symbol id="d-area" viewBox="0 0 24 26"><path d="M3 10L13 1l8 14-10 8z" fill="#f3a027"/><path d="M3 10l8 13 1 2-7-3-3-8z" fill="#ddd"/></symbol>
<symbol id="d-eye" viewBox="0 0 24 24"><ellipse cx="12" cy="12" rx="11" ry="8" fill="none" stroke="#eee" stroke-width="1.4"/><circle cx="12" cy="12" r="5" fill="#eee"/></symbol>
<symbol id="d-x" viewBox="0 0 22 26"><path d="M3 3l16 20M19 3L3 23" stroke="#eee" stroke-width="1.300" fill="none"/></symbol>
<symbol id="d-dots" viewBox="0 0 22 24"><rect x="7" y="6" width="3" height="3" fill="#e8821e"/><path d="M6 19h2M11 19h2M16 19h2" stroke="#eee" stroke-width="2"/></symbol>
<symbol id="d-curve" viewBox="0 0 30 30"><path d="M6 28C6 12 14 5 26 3" fill="none" stroke="#d56f00" stroke-width="1.300"/><path d="M15 4L5 24" stroke="#1fb4d8" stroke-width="1.400"/><circle cx="18" cy="19" r="6" fill="none" stroke="#1fb4d8" stroke-width="1.400"/></symbol>
<symbol id="d-origin" viewBox="0 0 30 30"><path d="M4 4h13q9 2 9 12v9H4z" fill="none" stroke="#6a6a6a" stroke-width="1.200"/><circle cx="6" cy="25" r="2.500" fill="#6a6a6a"/></symbol>
<symbol id="d-add" viewBox="0 0 20 20"><circle cx="10" cy="10" r="8" fill="#fff" stroke="#111" stroke-width="1.200"/><path d="M10 4v12M4 10h12" stroke="#111" stroke-width="1.400"/></symbol>
<symbol id="d-ua" viewBox="0 0 20 20"><path d="M10 2l7 7h-4v9H7V9H3z" fill="none" stroke="#6a6a6a"/></symbol>
<symbol id="d-da" viewBox="0 0 20 20"><path d="M10 18l7-7h-4V2H7v9H3z" fill="none" stroke="#6a6a6a"/></symbol>
<symbol id="d-spiral" viewBox="0 0 18 14"><ellipse cx="9" cy="3" rx="8" ry="2.500" fill="#12b0e0"/><ellipse cx="9" cy="7" rx="8" ry="2.500" fill="#12b0e0" stroke="#333" stroke-width=".6"/><ellipse cx="9" cy="11" rx="8" ry="2.500" fill="#12b0e0" stroke="#333" stroke-width=".6"/></symbol>
<symbol id="d-gen" viewBox="0 0 30 32"><path d="M10 3H2v7h8v7H2v8h8" fill="none" stroke="currentColor" stroke-width="1.200"/><path d="M15 22a6 6 0 0 1 10-5l2-2v5h-5M27 23a6 6 0 0 1-10 4l-2 2v-5h5" fill="none" stroke="currentColor" stroke-width="1.200"/></symbol>
<symbol id="d-rep" viewBox="0 0 30 32"><path d="M10 3H2v7h8v7H2v8h8" fill="none" stroke="#6a6a6a" stroke-width="1.200"/><path d="M16 18a7 7 0 1 0 8-6m0-3v6h-5" fill="none" stroke="#6a6a6a" stroke-width="1.200"/></symbol>
<symbol id="d-chk" viewBox="0 0 30 32"><path d="M12 2h6v7l8 4v12l-11 6-12-6V13l9-4z" fill="#666"/><circle cx="22" cy="23" r="7" fill="#555" stroke="#888"/><path d="M19 23l2 3 4-6" stroke="#999" fill="none"/></symbol>
<symbol id="d-list" viewBox="0 0 30 32"><path d="M4 2h9l5 5v8M13 2v5h5M10 7H3v7h7v7H3v8h7M15 17h8l5 6-5 7h-8M15 23h11" fill="none" stroke="#6a6a6a"/></symbol>
<symbol id="d-selop" viewBox="0 0 30 32"><path d="M10 3H2v7h8v7H2v8h8" fill="none" stroke="#eee" stroke-width="1.200"/><circle cx="20" cy="12" r="4.500" fill="none" stroke="#e8821e" stroke-width="1.300"/><path d="M20 3v18M12 12h17" stroke="#eee"/></symbol>
<symbol id="b-smile" viewBox="0 0 20 20"><circle cx="10" cy="10" r="9" fill="none" stroke="#eee" stroke-width="1.200"/><circle cx="7" cy="8" r="1" fill="#eee"/><circle cx="13" cy="8" r="1" fill="#eee"/><path d="M5.500 12c2 3.500 7 3.500 9 0" fill="none" stroke="#eee"/></symbol>
<symbol id="b-frown" viewBox="0 0 20 20"><circle cx="10" cy="10" r="9" fill="none" stroke="#eee" stroke-width="1.200"/><circle cx="7" cy="8" r="1" fill="#eee"/><circle cx="13" cy="8" r="1" fill="#eee"/><path d="M5.500 15c2-3.500 7-3.500 9 0" fill="none" stroke="#eee"/></symbol>
<symbol id="b-search" viewBox="0 0 18 20"><circle cx="11" cy="7" r="5.500" fill="none" stroke="#eee" stroke-width="1.300"/><path d="M7 12L2 18" stroke="#eee" stroke-width="2"/></symbol>
<symbol id="b-full" viewBox="0 0 18 18"><path d="M1 6V1h5M12 1h5v5M17 12v5h-5M6 17H1v-5" fill="none" stroke="#eee" stroke-width="1.200"/></symbol>
<symbol id="b-chev" viewBox="0 0 18 18"><path d="M2 14l7-10 7 10" fill="none" stroke="#eee" stroke-width="1.200"/></symbol>
<symbol id="w-restore" viewBox="0 0 14 14"><path d="M1 4h9v9H1zM1 7h9M4 4V1h9v9h-3" fill="none" stroke="#eee" stroke-width="1.500"/></symbol>
<symbol id="k-win" viewBox="0 0 30 30"><rect x="0" y="0" width="14" height="14" fill="url(#win)"/><rect x="15.500" y="0" width="14.500" height="14" fill="url(#win)"/><rect x="0" y="15.500" width="14" height="14.500" fill="url(#win)"/><rect x="15.500" y="15.500" width="14.500" height="14.500" fill="url(#win)"/></symbol>
<symbol id="k-search" viewBox="0 0 24 24"><circle cx="10.500" cy="10.500" r="7.500" fill="none" stroke="#222" stroke-width="2.200"/><path d="M15.500 17l5 6" stroke="#222" stroke-width="2.400"/></symbol>
<symbol id="k-village" viewBox="0 0 64 40"><ellipse cx="34" cy="34" rx="30" ry="6" fill="#3f8fc4"/><path d="M10 33q2-6 8-8l12-8 24-8 6 8-1 16z" fill="#c98a3f"/><rect x="25" y="14" width="6" height="10" fill="#e67c52"/><rect x="32" y="11" width="7" height="10" fill="#f0a860"/><rect x="41" y="9" width="7" height="14" fill="#e8884a"/><rect x="50" y="6" width="7" height="14" fill="#f2b739"/><rect x="37" y="0" width="3" height="12" fill="#d46a7e"/><rect x="8" y="18" width="4" height="12" fill="#b04444"/><path d="M4 34h30" stroke="#2c6e9a" stroke-width="2" stroke-dasharray="3 2"/></symbol>
<symbol id="k-task" viewBox="0 0 30 30"><rect x="0" y="11" width="22" height="19" rx="2" fill="#2b2b2b"/><rect x="8" y="0" width="22" height="19" rx="2" fill="#f0f0f0" opacity=".92"/><rect x="8" y="11" width="14" height="8" fill="#bbb"/></symbol>
<symbol id="k-folder" viewBox="0 0 30 30"><path d="M0 2h11l3 4h16v23H0z" fill="#e0a400"/><rect x="0" y="7" width="30" height="22" fill="#fdcf44"/><rect x="9" y="21" width="12" height="9" rx="1" fill="#1b78c8"/><rect x="12" y="24" width="6" height="1.500" fill="#9cd"/></symbol>
<symbol id="k-edge" viewBox="0 0 30 30"><path d="M15 0c9 0 15 6 15 15 0 4-4 6-8 6-5 0-10-2-10-7 0-3 2-5 4-6-8 0-12 5-12 10 0 7 5 12 11 12-9 2-15-6-15-14C0 7 6 0 15 0z" fill="url(#edge)"/><path d="M15 0c9 0 15 6 15 15 0 4-4 6-8 6 2 0 3-2 3-4 0-6-5-9-10-9-8 0-12 5-12 10C1 6 7 0 15 0z" fill="#5fe07c" opacity=".7"/><path d="M28 22c-3 5-8 8-13 8-5 0-9-3-10-8 2 3 5 5 9 5 5 0 10-2 14-5z" fill="#1256a0"/></symbol>
<symbol id="k-blue" viewBox="0 0 30 30"><ellipse cx="15" cy="15" rx="15" ry="15" fill="#0b4fc2"/><path d="M9 7h12v16H9z" fill="none" stroke="#fff" stroke-width="1.500"/><circle cx="15" cy="15" r="5" fill="none" stroke="#bfe" stroke-width="1.500"/><path d="M7 15h6M17 4l4 3-4 3" fill="none" stroke="#fff"/></symbol>
<symbol id="k-weather" viewBox="0 0 32 32"><path d="M8 15c4 2 14 0 18-4 1 10-4 19-12 19C8 30 4 24 8 15z" fill="url(#moon)"/><path d="M4 17a5 5 0 0 1 1-10 6 6 0 0 1 11-1 5 5 0 0 1 2 11z" fill="#bcd5f2"/></symbol>
<symbol id="k-chev" viewBox="0 0 18 10"><path d="M2 9l7-7 7 7" fill="none" stroke="#111" stroke-width="1.700"/></symbol>
<symbol id="k-cloud" viewBox="0 0 22 14"><path d="M5 13a4 4 0 0 1-1-8 6 6 0 0 1 11-2 5 5 0 0 1 2 10z" fill="#8a8a8a"/><path d="M3 13h17l-6-5z" fill="#dadada"/></symbol>
<symbol id="k-net" viewBox="0 0 22 24"><path d="M14 2H1v14h14M8 16v5M3 21h12" fill="none" stroke="#111" stroke-width="1.200"/><rect x="16" y="1" width="5" height="9" rx="2" fill="none" stroke="#111"/><path d="M18.500 10v7" stroke="#111"/></symbol>
<symbol id="k-sound" viewBox="0 0 22 20"><path d="M1 7h4l5-5v16l-5-5H1z" fill="none" stroke="#111" stroke-width="1.200"/><path d="M13 6q3 4 0 8M16 4q4 6 0 12M19 2q5 8 0 16" fill="none" stroke="#111" stroke-width="1.200"/></symbol>
<symbol id="k-bell" viewBox="0 0 18 20"><path d="M9 0c4 0 6 3 6 7l1 7 2 2H0l2-2 1-7c0-4 2-7 6-7z" fill="#0a3f9c"/><path d="M6 17h6a3 3 0 0 1-6 0z" fill="#0a3f9c"/></symbol>
</svg>

<div class="app">
  <header class="titlebar">
    <div class="qat">
      <b class="nx">NX</b>
      <i class="sep ml7"></i><svg class="i i-q ml8"><use href="#q-save"/></svg>
      <i class="sep ml5"></i><svg class="i i-q ml6"><use href="#q-undo"/></svg><i class="tri tri-blue ml7"></i>
      <i class="sep ml8"></i><svg class="i i-q ml4"><use href="#q-cut"/></svg><svg class="i i-q ml6"><use href="#q-copy"/></svg><svg class="i i-q ml6"><use href="#q-paste"/></svg><svg class="i i-q ml6"><use href="#q-del"/></svg>
      <i class="sep ml7"></i><svg class="i i-q ml5"><use href="#q-mode"/></svg><i class="tri ml8"></i>
      <i class="sep ml8"></i><svg class="i i-q ml5"><use href="#q-mic"/></svg>
      <i class="sep ml6"></i><svg class="i i-q ml5"><use href="#q-cast"/></svg>
      <i class="sep ml10"></i><svg class="i i-q ml1"><use href="#q-wins"/></svg><svg class="i i-q ml6"><use href="#q-win"/></svg><span class="wintxt">窗口</span><i class="tri ml3"></i><i class="tri tri-over ml9"></i>
    </div>
    <div class="apptitle">冷月 - NX 2312.1700 - 加工</div>
    <div class="brand">SIEMENS</div>
    <div class="winbtns"><span class="min"></span><svg class="i i-r"><use href="#w-restore"/></svg><span class="close">X</span></div>
  </header>

  <nav class="menubar">
    <a>文件(F)</a><a class="on">主页</a><a>应用模块</a><a>几何体</a><a>曲线</a><a>模圣软件</a><a>模圣设计</a><a>LXH编程2.8_CAM</a><a>LXH编程2.8_建模</a><a>燕秀UG工具</a><a>分析</a><a>视图</a><a>显示</a><a>选择</a><a>工具</a><a>机床</a><a>GC工具箱</a><a>燕秀CNC超级程式单5.3</a><a>曲面</a><a>星空-加工工具</a><a>星空-电极工具</a><a>星空-常用工具</a><a>星空 V8.210</a>
    <div class="menutools">
      <svg class="i i20"><use href="#b-smile"/></svg><svg class="i i20"><use href="#b-frown"/></svg>
      <div class="cmd"><span>在此输入以搜索</span><svg class="i i20"><use href="#b-search"/></svg></div>
      <svg class="i i18"><use href="#b-full"/></svg><svg class="i i18"><use href="#b-chev"/></svg><span class="helpb">?</span><span class="bang">!</span>
    </div>
  </nav>

  <section class="ribbon">
    <div class="grp g1">
      <div class="items">
        <div class="rb off"><svg class="i i36"><use href="#i-tool"/></svg><span>创建刀具</span></div>
        <div class="rb off"><svg class="i i36"><use href="#i-geom"/></svg><span>创建几何体</span></div>
        <div class="rb off"><svg class="i i36"><use href="#i-oper"/></svg><span>创建工序</span></div>
        <div class="rb minis"><svg class="i i28"><use href="#i-mini1"/></svg><svg class="i i28"><use href="#i-mini2"/></svg></div>
      </div>
      <div class="lbl"><span>插入</span><i class="tri"></i></div>
    </div>
    <div class="grp g2">
      <div class="items">
        <div class="rb off"><svg class="i i36"><use href="#i-wall"/></svg><span>底壁铣</span></div>
        <div class="rb off"><svg class="i i36"><use href="#i-face"/></svg><span>面铣 - 单<br>向，往复</span></div>
        <div class="rb off"><svg class="i i36"><use href="#i-cav"/></svg><span>型腔铣</span></div>
        <div class="rb off"><svg class="i i36"><use href="#i-plane"/></svg><span>平面铣</span></div>
        <div class="rb off"><svg class="i i36"><use href="#i-deep"/></svg><span>深度轮廓<br>铣 - 陡峭</span></div>
      </div>
      <div class="lbl"><span>预测工序</span></div>
    </div>
    <div class="grp g3">
      <div class="items">
        <div class="rb off"><svg class="i i36"><use href="#i-prop"/></svg><span>属性</span><i class="tri"></i></div>
      </div>
      <div class="lbl"><span>操作</span><i class="tri"></i></div>
    </div>
    <div class="grp g4">
      <div class="items">
        <div class="rb"><svg class="i i36"><use href="#i-gen"/></svg><span>生成刀轨</span></div>
        <div class="rb off"><svg class="i i36"><use href="#i-check"/></svg><span>检查刀轨</span></div>
        <div class="rb"><svg class="i i36"><use href="#i-valid"/></svg><span>有效性报告</span></div>
        <div class="rb off"><svg class="i i36"><use href="#i-confirm"/></svg><span>确认刀轨</span></div>
        <div class="rb off"><svg class="i i36"><use href="#i-mach"/></svg><span>机床仿真</span></div>
        <div class="rb off"><svg class="i i36"><use href="#i-post"/></svg><span>后处理</span></div>
        <div class="rb"><svg class="i i36"><use href="#i-more1"/></svg><span>更多</span><i class="tri"></i></div>
      </div>
      <div class="lbl"><span>工序</span><i class="tri"></i></div>
    </div>
    <div class="grp g5">
      <div class="items">
        <div class="rb off"><svg class="i i36"><use href="#i-vt"/></svg><span>VT仿真</span></div>
      </div>
      <div class="lbl"><span>VT</span><i class="tri"></i></div>
    </div>
    <div class="grp g6">
      <div class="items">
        <div class="rb act"><svg class="i i36"><use href="#i-show"/></svg><span>显示刀轨</span></div>
        <div class="rb act"><svg class="i i36"><use href="#i-sel"/></svg><span>选择刀轨</span></div>
        <div class="rb"><svg class="i i36"><use href="#i-rep"/></svg><span>刀轨报告</span></div>
        <div class="smallcol">
          <div class="boxblue"><svg class="i i30"><use href="#i-stepeye"/></svg></div>
          <div class="millrow"><svg class="i i26"><use href="#i-endmill"/></svg><i class="tri"></i></div>
        </div>
        <div class="arrows">
          <svg class="i i-ar"><use href="#i-up"/></svg><svg class="i i-sp"><use href="#i-spiral"/></svg><svg class="i i-ar"><use href="#i-down"/></svg>
        </div>
        <div class="rb"><svg class="i i36"><use href="#i-color"/></svg><span>更多</span><i class="tri"></i></div>
      </div>
      <div class="lbl"><span>显示</span><i class="tri"></i></div>
    </div>
    <div class="grp g7">
      <div class="items">
        <div class="anim">
          <svg class="i i24"><use href="#i-cprev"/></svg><span></span><svg class="i i24"><use href="#i-cnext"/></svg><span></span>
          <svg class="i i24"><use href="#i-cfirst"/></svg><i class="tri"></i><svg class="i i24"><use href="#i-clast"/></svg><i class="tri"></i>
        </div>
        <div class="speed">
          <div class="track"><b></b></div>
          <span>速度</span>
        </div>
      </div>
      <div class="lbl"><span>刀轨动画</span><i class="tri"></i></div>
    </div>
    <div class="grp g8">
      <div class="items">
        <div class="rb"><svg class="i i36"><use href="#i-ipw"/></svg><span>显示 IPW</span></div>
        <div class="rb"><svg class="i i36"><use href="#i-anal"/></svg><span>分析</span><i class="tri"></i></div>
        <div class="rb"><svg class="i i36"><use href="#i-ipwg"/></svg><span>更多</span><i class="tri"></i></div>
      </div>
      <div class="lbl"><span>IPW</span><i class="tri"></i></div>
    </div>
    <div class="grp g9">
      <div class="items">
        <div class="rb off"><svg class="i i36"><use href="#i-find"/></svg><span>查找特征</span></div>
        <div class="rb off"><svg class="i i36"><use href="#i-feat"/></svg><span>创建特征工艺</span></div>
        <div class="rb"><svg class="i i36"><use href="#i-featm"/></svg><span>更多</span><i class="tri"></i></div>
      </div>
      <div class="lbl"><span>特征</span><i class="tri"></i></div>
    </div>
    <div class="grp g10">
      <div class="items">
        <div class="rb off"><svg class="i i36"><use href="#i-postc"/></svg><span>后处理配置器</span><i class="tri"></i></div>
      </div>
      <div class="lbl"><span>工具</span><i class="tri"></i></div>
    </div>
    <div class="ribbonend"><i class="tri"></i></div>
  </section>

  <section class="selbar">
    <span class="hamb">三</span><span class="menulabel">菜单(<u>M</u>)</span><i class="tri"></i>
    <div class="combo sf1"><span>无选择过滤器</span><i class="tri"></i></div>
    <svg class="i i-fn"><use href="#s-funnel"/></svg>
    <div class="combo sf2"><span>仅在工作部件内</span><i class="tri"></i></div>
    <div class="stools">
      <svg class="i i18"><use href="#s-no"/></svg><svg class="i i18"><use href="#s-hex"/></svg><svg class="i i18"><use href="#s-face"/></svg><svg class="i i18"><use href="#s-hex2"/></svg><svg class="i i18"><use href="#s-hex2"/></svg><svg class="i i18"><use href="#s-curve"/></svg><svg class="i i18"><use href="#s-pts"/></svg>
      <svg class="i i20"><use href="#s-filt"/></svg><i class="tri t5"></i>
      <svg class="i i20"><use href="#s-or1"/></svg><svg class="i i20"><use href="#s-hexc"/></svg><svg class="i i20"><use href="#s-cube"/></svg><svg class="i i20"><use href="#s-box"/></svg><i class="tri t6"></i>
      <svg class="i i20"><use href="#s-b1"/></svg><svg class="i i20"><use href="#s-b2"/></svg>
      <i class="vs"></i>
      <span class="bl">
        <svg class="i i24" viewBox="0 0 24 24" xmlns="http://www.w3.org/2000/svg"><text x="12" y="8" font-size="7.500" font-weight="700" text-anchor="middle" fill="#fff" font-family="Liberation Sans">MCS</text><ellipse cx="12" cy="16" rx="9" ry="6" fill="#fff"/><circle cx="12" cy="16" r="4" fill="#005580"/><circle cx="12" cy="16" r="2" fill="#fff"/></svg>
      </span><span class="bl"><svg class="i i24"><use href="#s-wcs"/></svg></span><svg class="i i20 pct"><use href="#s-pct"/></svg>
      <i class="vs"></i>
    </div>
    <i class="tri endtri"></i>
  </section>

  <main class="main">
    <aside class="rail">
      <div class="ri first"><svg class="i i28"><use href="#r-gear"/></svg></div>
      <div class="ri"><svg class="i i28"><use href="#r-blocks"/></svg></div>
      <div class="ri"><svg class="i i28"><use href="#r-seat"/></svg></div>
      <div class="ri on"><svg class="i i28"><use href="#r-nav"/></svg></div>
      <div class="ri"><svg class="i i28"><use href="#r-tab"/></svg></div>
      <div class="ri"><svg class="i i28"><use href="#r-mach"/></svg></div>
      <div class="ri"><svg class="i i28"><use href="#r-tree"/></svg></div>
      <div class="ri"><svg class="i i28"><use href="#r-seat2"/></svg></div>
      <div class="ri"><svg class="i i28"><use href="#r-mag"/></svg></div>
      <div class="ri"><svg class="i i28"><use href="#r-globe"/></svg></div>
      <div class="ri"><svg class="i i28"><use href="#r-clock"/></svg></div>
      <div class="ri"><svg class="i i28"><use href="#r-tools"/></svg></div>
      <div class="ri"><svg class="i i28"><use href="#r-mach2"/></svg></div>
      <div class="ri"><svg class="i i28"><use href="#r-folder"/></svg></div>
    </aside>

    <section class="navpanel">
      <div class="navhead"><svg class="i i16"><use href="#t-nav"/></svg><span>工序导航器</span><i class="maxbox"></i></div>
      <div class="navtools">
        <span class="nt sel"><svg class="i i26"><use href="#n-sel1"/></svg></span>
        <span class="nt"><svg class="i i26"><use href="#n-sel2"/></svg></span>
        <span class="nt"><svg class="i i26"><use href="#n-sel3"/></svg></span>
        <span class="nt"><svg class="i i26"><use href="#n-sel4"/></svg></span>
        <span class="nb"><svg class="i i28"><use href="#n-add"/></svg></span>
        <span class="nb dis"><svg class="i i28"><use href="#n-del"/></svg></span>
      </div>
      <div class="tbl">
        <div class="tr th"><div>标题</div><div class="clip">换</div><div class="clip">刀</div><div>IPW</div><div></div><div></div><div></div><div>时间</div><div class="clip">进</div></div>
        <div class="tr"><div class="tree l0"><i class="exp minus"></i><svg class="i i18"><use href="#t-no"/></svg><svg class="i i-f"><use href="#t-folder"/></svg><span>NC_PROGRAM</span></div><div></div><div></div><div></div><div></div><div></div><div></div><div class="time">00:09:30</div><div></div></div>
        <div class="tr"><div class="tree l1"><i class="exp minus"></i><svg class="i i-f"><use href="#t-folder"/></svg><span>未用项</span></div><div></div><div></div><div></div><div></div><div></div><div></div><div class="time">00:04:36</div><div></div></div>
        <div class="tr selrow"><div class="tree l2"><i class="exp"></i><svg class="i i18"><use href="#t-no"/></svg><svg class="i i-f"><use href="#t-folder"/></svg><span class="hl">NC10-2</span></div><div></div><div></div><div></div><div></div><div></div><div></div><div class="time">00:04:36</div><div></div></div>
        <div class="tr"><div class="tree l1b"><i class="exp"></i><svg class="i i18"><use href="#t-no"/></svg><svg class="i i-f"><use href="#t-folder"/></svg><span>NC</span></div><div></div><div></div><div></div><div></div><div></div><div></div><div class="time">00:04:54</div><div></div></div>
        <div class="tempty"></div>
        <div class="hscroll"><b></b></div>
      </div>
    </section>

    <section class="view">
      <div class="tabs">
        <div class="tab"><svg class="i i16"><use href="#t-home"/></svg><span>发现中心</span></div>
        <div class="tab active"><svg class="i i14"><use href="#t-ug"/></svg><span>ug10.prt</span><svg class="i i-doc"><use href="#t-doc"/></svg><i class="tri"></i></div>
      </div>

      <div class="floatbar">
        <div class="combo dis"><span>单个面</span><i class="tri"></i></div>
        <div class="combo en"><span>相切曲线</span><i class="tri"></i></div>
        <div class="combo dis"><span>单个体</span><i class="tri"></i></div>
        <svg class="i i26"><use href="#v-cross1"/></svg><svg class="i i26"><use href="#v-cross2"/></svg><svg class="i i26"><use href="#v-cross3"/></svg><span class="dots">…</span><svg class="i i26 orient"><use href="#v-orient"/></svg><i class="tri"></i><i class="fsep"></i><i class="tri ftri"></i>
      </div>

      <svg class="gizmo" viewBox="0 0 130 112" xmlns="http://www.w3.org/2000/svg">
        <text x="16" y="8" font-size="10" fill="#2fb84a" font-family="Liberation Sans">Y</text>
        <path d="M21 62V22" stroke="#1f9a3c" stroke-width="3"/><path d="M21 10l-5 16h10z" fill="#1f9a3c"/>
        <rect x="0" y="62" width="42" height="44" fill="#26272b" stroke="#e8e8e8" stroke-width="1.200"/>
        <circle cx="21" cy="84" r="4.500" fill="#1a2fd0"/><circle cx="21" cy="84" r="2" fill="#c02020"/>
        <path d="M42 84h38" stroke="#d02020" stroke-width="3"/><path d="M94 84l-16-5v10z" fill="#d02020"/>
        <text x="103" y="88" font-size="10" fill="#d02020" font-family="Liberation Sans">X</text>
      </svg>

      <div class="dialog">
        <div class="dtitle"><svg class="i i16"><use href="#d-gear"/></svg><span>固定轴引导曲线 - [FIXED_AXIS_GUIDING_CURVES]</span><em>?</em><em class="cl">✕</em></div>
        <div class="dsearch"><svg class="i i26"><use href="#d-bino"/></svg><span>查找</span><div class="dinput"></div></div>
        <div class="dcols">
          <ul class="dtree">
            <li>预测</li><li class="cur">主要</li><li>几何体</li><li>轴和避让</li><li>进给率和速度</li><li>策略</li><li class="has">非切削移动</li><li>方法和公差</li><li>碰撞检查</li><li>刀具、程序和机床控制</li><li class="last">选项</li>
          </ul>
          <div class="dpane">
            <div class="dscroll">
              <section class="gb gb1">
                <h4>主要</h4>
                <div class="fr fr-tool"><label>刀具</label><div class="combo c-tool"><span>D3R1.5 (铣刀-5</span><i class="tri"></i></div><span class="ibtn"><svg class="i i26"><use href="#d-tooladd"/></svg></span><span class="ibtn"><svg class="i i26"><use href="#d-toolshow"/></svg></span></div>
                <div class="fr fr-area"><label>指定切削区域</label><span class="ibtn"><svg class="i i26"><use href="#d-area"/></svg></span><span class="ibtn"><svg class="i i26"><use href="#d-eye"/></svg></span></div>
              </section>
              <section class="gb gb2">
                <h4 class="bold">驱动几何体</h4>
                <div class="fr fr-c mode"><label>模式类型</label><div class="combo fc"><span>变形</span><i class="tri"></i></div></div>
                <section class="gb inner">
                  <h4 class="bold">引导曲线</h4>
                  <div class="pick"><div class="pickmain"><svg class="chk" viewBox="0 0 16 20"><path d="M1 12l4 6L15 2" fill="none" stroke="#2fd34a" stroke-width="2"/></svg><span>选择曲线 (2)</span></div><span class="ibtn s"><svg class="i i22"><use href="#d-x"/></svg></span><span class="ibtn s dash"><svg class="i i22"><use href="#d-dots"/></svg></span><span class="orange"><svg class="i i30"><use href="#d-curve"/></svg></span></div>
                  <div class="fr orig"><label>指定原点曲线</label><span class="ibtn o dis"><svg class="i i30"><use href="#d-origin"/></svg></span></div>
                  <div class="fr addset"><label>添加新集</label><span class="addbtn"><svg class="i i20"><use href="#d-add"/></svg></span></div>
                  <h4 class="bold sub">列表</h4>
                  <div class="listwrap">
                    <div class="dlist">
                      <div class="lr sel"><div>导轨&nbsp; 1</div><div></div></div>
                      <div class="lr"><div></div><div></div></div>
                      <div class="lr"><div></div><div></div></div>
                      <div class="lr"><div></div><div></div></div>
                    </div>
                    <div class="listbtns">
                      <span class="lb"><svg class="i i22"><use href="#d-x"/></svg></span>
                      <span class="lb dis"><svg class="i i20"><use href="#d-ua"/></svg></span>
                      <span class="lb dis"><svg class="i i20"><use href="#d-da"/></svg></span>
                    </div>
                  </div>
                </section>
              </section>
              <section class="gb gb3">
                <h4 class="bold">刀轨设置</h4>
                <div class="fr fr-c first"><label>切削模式</label><div class="combo fc"><span><svg class="i i-sp2"><use href="#d-spiral"/></svg>螺旋</span><i class="tri"></i></div></div>
                <div class="fr fr-c"><label>切削方向</label><div class="combo fc"><span>沿引导线</span><i class="tri"></i></div></div>
                <div class="fr fr-c"><label>切削顺序</label><div class="combo fc"><span>从引导线 1</span><i class="tri"></i></div></div>
                <div class="fr fr-c"><label>精加工刀路</label><div class="combo fc"><span>两者</span><i class="tri"></i></div></div>
              </section>
            </div>
            <div class="vscroll"><b></b></div>
          </div>
        </div>
        <section class="gb ops">
          <h4 class="bold">操作</h4>
          <div class="opbtns">
            <span class="obtn"><svg class="i i30 white"><use href="#d-gen"/></svg></span>
            <span class="obtn dis"><svg class="i i30"><use href="#d-rep"/></svg></span>
            <span class="obtn dis"><svg class="i i30"><use href="#d-chk"/></svg></span>
            <span class="obtn dis"><svg class="i i30"><use href="#d-list"/></svg></span>
            <span class="obtn last"><svg class="i i30"><use href="#d-selop"/></svg></span>
          </div>
        </section>
        <div class="collapse"><i class="tri up"></i></div>
        <footer class="dfoot"><button>确定</button><button>取消</button></footer>
      </div>
    </section>

    <aside class="rrail">
      <svg class="i gi"><use href="#g-snake-eye"/></svg>
      <svg class="i gi"><use href="#g-star"/></svg>
      <svg class="i gi"><use href="#g-hole"/></svg>
      <svg class="i gi"><use href="#g-expand"/></svg>
      <svg class="i gi"><use href="#g-snake-ref"/></svg>
      <svg class="i gi"><use href="#g-wire"/></svg>
      <svg class="i gi"><use href="#g-axes"/></svg>
      <svg class="i gi"><use href="#g-eyeoff"/></svg>
      <svg class="i gi"><use href="#g-ruler"/></svg>
      <svg class="i gi"><use href="#g-snake-t"/></svg>
      <i class="tri left railarrow"></i>
    </aside>
  </main>

  <div class="status">选择曲线</div>

  <footer class="taskbar">
    <div class="weather">
      <span class="wicon"><svg class="i i32"><use href="#k-weather"/></svg><b>1</b></span>
      <div class="wtxt"><span>21°C</span><span class="wsub">大部晴朗</span></div>
    </div>
    <div class="tasks">
      <svg class="i i30"><use href="#k-win"/></svg>
      <div class="pill"><svg class="i i24"><use href="#k-search"/></svg><span>搜索</span><svg class="village"><use href="#k-village"/></svg></div>
      <span class="tk"><svg class="i i30"><use href="#k-task"/></svg></span>
      <span class="tk"><svg class="i i30"><use href="#k-folder"/></svg></span>
      <span class="tk dot"><svg class="i i30"><use href="#k-edge"/></svg></span>
      <span class="tk dot"><svg class="i i30"><use href="#k-blue"/></svg></span>
      <span class="tk cur">
        <svg class="i i30" viewBox="0 0 30 30" xmlns="http://www.w3.org/2000/svg"><rect x="0" y="4" width="22" height="26" fill="#0f9a9a"/><rect x="4" y="0" width="26" height="26" fill="#8e1108"/><text x="17" y="21" font-size="14.500" font-weight="700" text-anchor="middle" fill="#fff" font-family="Liberation Sans">NX</text></svg>
      </span>
    </div>
    <div class="tray">
      <svg class="i tr-chev"><use href="#k-chev"/></svg>
      <svg class="i tr-cloud"><use href="#k-cloud"/></svg>
      <span class="ime">英</span><span class="ime p">拼</span>
      <svg class="i tr-net"><use href="#k-net"/></svg>
      <svg class="i tr-snd"><use href="#k-sound"/></svg>
      <div class="clock"><span>19:19</span><span>2024/1/9</span></div>
      <svg class="i tr-bell"><use href="#k-bell"/></svg>
    </div>
    <div class="wm">UG爱好者论坛@寒月伴花痴</div>
  </footer>
</div>
</body>
</html>
```

FILE: styles.css
```css
*{box-sizing:border-box}
html,body{margin:0;padding:0;width:2560px;height:1440px;overflow:hidden;background:#333}
body{font:14px/20px "Noto Sans CJK SC","Noto Sans",sans-serif;color:#e8e8e8}
.defs{position:absolute;width:0;height:0}
.i{display:block;flex:none;overflow:visible}
.i14{width:14px;height:14px}.i16{width:16px;height:16px}.i18{width:18px;height:18px}.i20{width:20px;height:20px}
.i22{width:22px;height:22px}.i24{width:24px;height:24px}.i26{width:26px;height:26px}.i28{width:28px;height:28px}
.i30{width:30px;height:30px}.i32{width:32px;height:32px}.i36{width:36px;height:36px}
.tri{display:block;flex:none;width:0;height:0;border-left:5px solid transparent;border-right:5px solid transparent;border-top:7px solid #fff}
.tri.up{border-top:0;border-bottom:7px solid #fff}
.tri.left{border:5px solid transparent;border-right:7px solid #fff;border-left:0}
.ml1{margin-left:1px}.ml3{margin-left:3px}.ml4{margin-left:4px}.ml5{margin-left:5px}.ml6{margin-left:6px}.ml7{margin-left:7px}.ml8{margin-left:8px}.ml9{margin-left:9px}.ml10{margin-left:10px}

.app{display:grid;grid-template-rows:32px 30px 110px 30px 1156px 23px 59px;height:1440px}

/* title bar */
.titlebar{display:flex;align-items:center;background:#333}
.qat{display:flex;align-items:center;width:1322px;padding-left:4px}
.nx{font:700 25px/1 "Liberation Sans",sans-serif;color:#fff;width:36px;transform:scaleY(.95)}
.sep{display:block;width:1px;height:22px;background:#24424f}
.i-q{width:18px;height:18px}
.tri-blue{border-top-color:#2f96c0!important}
.qat .tri{border-left-width:4px;border-right-width:4px;border-top-width:6px}
.wintxt{font-size:14.500px;color:#fff;margin-left:2px;width:30px}
.tri-over{position:relative}
.tri-over::before{content:"";position:absolute;left:-4px;top:-9px;width:8px;height:1px;background:#fff}
.apptitle{font-size:15px;color:#e8e8e8;width:1058px;letter-spacing:.3px}
.brand{font:700 15px/1 "Liberation Sans",sans-serif;color:#fff;width:104px;letter-spacing:.3px}
.winbtns{display:flex;align-items:center;gap:18px}
.min{display:block;width:8px;height:3px;background:#eee;margin-top:10px}
.i-r{width:12px;height:12px}
.close{font:15px/1 "Liberation Sans",sans-serif;color:#fff;width:22px}

/* menu */
.menubar{display:flex;align-items:stretch;padding-left:21px;background:#333}
.menubar a{display:block;font-size:16px;line-height:30px;color:#eee;margin-right:25px;white-space:nowrap;letter-spacing:.12px}
.menubar a.on{color:#ffc04a;padding:0 13px;border-bottom:2px solid #ffc04a;margin:0 13px 0 0;line-height:28px}
.menutools{display:flex;align-items:center;gap:8px;margin-left:auto}
.cmd{display:flex;align-items:center;justify-content:space-between;width:220px;height:26px;border:1px solid #bdbdbd;font-size:14px;color:#6f6f6f;padding:0 2px 0 1px;margin:0 2px 0 2px}
.bang{color:#555;width:20px;text-align:center;margin-left:8px}
.menutools .i18{margin:0 1px}
.helpb{display:block;width:20px;height:20px;border:1px solid #eee;border-radius:50%;text-align:center;font:13px/18px "Liberation Sans",sans-serif;color:#eee;flex:none}

/* ribbon */
.ribbon{display:flex;padding-top:7px;border-bottom:2px solid #141414;background:#333}
.grp{height:98px;border-right:1px solid #1d1d1d;display:flex;flex-direction:column;flex:none}
.items{height:84px;display:grid;grid-auto-flow:column;align-items:start}
.lbl{height:14px;display:grid;grid-template-columns:1fr 16px;padding-right:6px;align-items:center;justify-items:center;color:#3b9dc3;font-size:14px;line-height:14px}
.rb{display:flex;flex-direction:column;align-items:center;padding-top:1px;white-space:nowrap;text-align:center;color:#f2f2f2;font-size:14px;line-height:20px}
.rb span{display:block}
.rb.off{color:#777}
.rb .tri{margin-top:6px;border-top-width:6px;border-left-width:4px;border-right-width:4px}
.minis{gap:8px}
.g1{width:261px}.g1 .items{padding-left:8px;grid-template-columns:66px 82px 62px 38px}
.g2{width:303px}.g2 .items{padding-left:5px;grid-template-columns:58px 58px 62px 42px 70px}
.g3{width:56px}.g3 .items{grid-template-columns:56px}
.g4{width:453px}.g4 .items{padding-left:7px;grid-template-columns:66px 66px 76px 72px 60px 56px 52px}
.g5{width:69px}.g5 .items{grid-template-columns:69px}
.g6{width:349px}.g6 .items{padding-left:10px;grid-template-columns:64px 65px 64px 54px 50px 42px}
.g7{width:224px}.g7 .items{display:flex;padding:7px 0 0 11px}
.g8{width:166px}.g8 .items{padding-left:2px;grid-template-columns:78px 32px 50px}
.g9{width:218px}.g9 .items{grid-template-columns:82px 78px 70px}
.g10{width:108px}.g10 .items{grid-template-columns:108px}
.ribbonend{flex:1;display:flex;align-items:flex-end;justify-content:flex-end;padding:0 6px 6px 0}
.rb.act{background:#005580;height:82px;margin-top:-2px;padding-top:3px}
.smallcol{display:flex;flex-direction:column;align-items:flex-start;padding:3px 0 0 5px}
.boxblue{width:32px;height:32px;background:#005580;display:flex;align-items:center;justify-content:center}
.millrow{display:flex;align-items:center;gap:8px;margin-top:9px}
.millrow .tri{border-top-width:6px;border-left-width:4px;border-right-width:4px}
.arrows{display:flex;flex-direction:column;align-items:center;padding-top:3px}
.i-ar{width:18px;height:16px}
.i-sp{width:14px;height:14px;margin:12px 0 11px}
.anim{display:grid;grid-template-columns:24px 28px 24px 28px;grid-template-rows:24px 24px;row-gap:13px;align-items:center;width:104px}
.anim .tri{margin-left:10px;border-top-width:6px;border-left-width:4px;border-right-width:4px}
.speed{width:96px;margin-left:1px;display:flex;flex-direction:column;align-items:center;padding-top:2px}
.track{width:96px;height:6px;background:#bbb;display:flex;align-items:center;justify-content:center;margin-top:5px;margin-bottom:12px}
.track b{display:block;width:10px;height:20px;background:#3195bb;flex:none}
.speed span{font-size:14px;line-height:20px;color:#f2f2f2;margin-top:4px}

/* selection bar */
.selbar{display:flex;align-items:center;background:#333;padding:2px 0 0 12px;border-bottom:2px solid #141414}
.hamb{font-size:12px;width:18px;color:#eee}
.menulabel{font-size:14px;width:60px;color:#eee}
.selbar>.tri{border-top-width:6px;border-left-width:4px;border-right-width:4px}
.combo{display:flex;align-items:center;justify-content:space-between;border:1px solid #cfcfcf;background:#333;padding:0 6px 0 2px;font-size:14px;color:#eee;white-space:nowrap}
.combo span{display:flex;align-items:center;overflow:hidden}
.sf1{width:182px;height:26px;margin-left:17px}
.sf2{width:191px;height:26px}
.i-fn{width:18px;height:20px;margin:0 9px}
.stools{display:flex;align-items:center;gap:8px;margin-left:8px}
.stools>.tri{border-top-width:6px;border-left-width:4px;border-right-width:4px}
.t5{margin-left:-5px}
.t6{margin-left:-6px}
.vs{display:block;width:1px;height:24px;background:#1d1d1d;margin-left:2px}
.bl{display:flex;width:24px;height:24px;background:#005580;margin-right:-6px;align-items:center;justify-content:center}
.pct{margin-left:-3px}
.endtri{margin-left:auto;margin-right:6px;border-top-width:6px;border-left-width:4px;border-right-width:4px}

/* main */
.main{display:grid;grid-template-columns:37px 506px 1980px 37px;background:#333;min-height:0}
.rail{background:#414141;border-right:1px solid #222;padding-top:4px;display:flex;flex-direction:column}
.ri{height:48.200px;display:flex;align-items:center;justify-content:center;flex:none;padding-left:2px}
.ri.first{height:32.200px}
.ri.on{background:#333;margin-left:3px;margin-right:-1px;border:1px solid #141414;border-right:0;height:47px;margin-top:.600px;margin-bottom:.600px;position:relative;padding-left:0}
.navpanel{background:#353535;padding:0 0 0 16px;border-right:2px solid #1a1a1a;display:flex;flex-direction:column}
.navhead{display:flex;align-items:center;height:32px;gap:5px;font-size:15px;margin-left:-9px;color:#e8e8e8}
.maxbox{display:block;width:12px;height:11px;border:1px solid #fff;border-top-width:2px;margin-left:auto;margin-right:13px}
.navtools{display:flex;height:37px;padding:4px 0 1px 0;align-items:stretch;margin-left:-3px}
.nt{display:flex;align-items:center;justify-content:center;width:32px;margin-right:2px}
.nt.sel{background:#005580}
.nb{display:flex;align-items:center;justify-content:center;width:32px;border:1px solid #cfcfcf;margin-right:4px;color:#eee}
.nb.dis{border-color:#707070;color:#666}
.tbl{width:471px;height:1068px;margin-top:5px;border:1px solid #141414;border-bottom:0;display:flex;flex-direction:column;overflow:hidden;background:#333}
.tr{display:grid;grid-template-columns:237px 24px 24px 54px 10px 10px 10px 88px 12px;height:24px;border-bottom:1px solid #2a2a2a;flex:none}
.tr>div{border-right:1px solid #2b2b2b;overflow:hidden;white-space:nowrap;font-size:15px;line-height:23px}
.tr>div:first-child{border-right:1px solid #0d0d0d}
.th{background:#5a5a5a}
.th>div{padding-left:6px;border-right:1px solid #333!important;color:#eee;font-size:14px}
.th>div.clip{padding-left:5px}
.time{padding-left:5px;font-family:"Noto Sans",sans-serif;color:#eee}
.tree{display:flex;align-items:center;gap:1px}
.tree span{font-family:"Noto Sans","Noto Sans CJK SC",sans-serif;margin-left:2px;color:#eee;font-size:16px}
.l0{padding-left:4px}
.l1,.l1b{padding-left:23px}
.l2{padding-left:42px}
.l1{background:repeating-linear-gradient(#ddd 0 1px,transparent 1px 2px) 28px 12px/1px 12px no-repeat}
.l1b{background:repeating-linear-gradient(#ddd 0 1px,transparent 1px 2px) 28px 0/1px 12px no-repeat}
.exp{display:block;flex:none;width:11px;height:11px;border:1px solid #eee;margin-right:3px;background:#333 linear-gradient(#eee,#eee) center/7px 1px no-repeat;position:relative}
.exp::after{content:"";position:absolute;left:4px;top:1px;width:1px;height:7px;background:#eee}
.exp.minus::after{display:none}
.i-f{width:15px;height:13px}
.selrow>div{background:#005580;border-right-color:#2b6f92}
.selrow>div:first-child{background:repeating-linear-gradient(#ddd 0 1px,transparent 1px 2px) 28px 0/1px 24px no-repeat,repeating-linear-gradient(#ddd 0 1px,transparent 1px 2px) 47px 0/1px 6px no-repeat,linear-gradient(90deg,transparent 89px,#005580 89px)}
.hl{color:#fff!important}
.tempty{flex:1;background:
  linear-gradient(#0d0d0d,#0d0d0d) 236px 0/1px 100% no-repeat,
  linear-gradient(#2b2b2b,#2b2b2b) 260px 0/1px 100% no-repeat,
  linear-gradient(#2b2b2b,#2b2b2b) 284px 0/1px 100% no-repeat,
  linear-gradient(#2b2b2b,#2b2b2b) 338px 0/1px 100% no-repeat,
  linear-gradient(#2b2b2b,#2b2b2b) 348px 0/1px 100% no-repeat,
  linear-gradient(#2b2b2b,#2b2b2b) 358px 0/1px 100% no-repeat,
  linear-gradient(#2b2b2b,#2b2b2b) 368px 0/1px 100% no-repeat,
  linear-gradient(#2b2b2b,#2b2b2b) 456px 0/1px 100% no-repeat,
  repeating-linear-gradient(#333 0 23px,#2a2a2a 23px 24px)}
.hscroll{height:23px;background:#f2f2f2;display:flex;align-items:center;padding-left:21px;flex:none}
.hscroll b{display:block;width:176px;height:6px;background:#8a8a8a}

/* viewport */
.view{background:#26272b;position:relative;overflow:hidden}
.tabs{display:flex;height:32px;padding:3px 0 0 5px;gap:24px;background:#26272b;border-bottom:2px solid #3195bb;width:1981px;margin-right:-1px}
.tab{display:flex;align-items:center;gap:3px;font-size:14.500px;color:#eee;padding:0 2px}
.tab.active{background:#3195bb;width:126px;padding:0 4px;gap:5px;color:#fff}
.i-doc{width:10px;height:12px;margin-left:2px}
.tab .tri{border-top-width:5px;border-left-width:3px;border-right-width:3px;margin-left:3px}
.floatbar{position:absolute;left:579px;top:37px;width:823px;height:33px;background:#333;border-bottom:1px solid #111;display:flex;align-items:center;padding:2px 0 0 13px;gap:9px}
.floatbar .combo{width:192px;height:26px}
.floatbar .combo.dis{background:#4b4b4b;border-color:#7d7d7d;color:#777}
.floatbar .combo.dis .tri{border-top-color:#777}
.floatbar .tri{border-top-width:6px;border-left-width:4px;border-right-width:4px}
.dots{font-size:14px;color:#eee;width:14px;text-align:center}
.orient{margin-left:4px}
.fsep{display:block;width:1px;height:26px;background:#111;margin-left:6px}
.ftri{margin-left:-2px;margin-top:6px}
.gizmo{position:absolute;left:86px;top:958px;width:130px;height:112px}

/* dialog */
.dialog{position:absolute;left:528px;top:159px;width:733px;height:857px;background:#333;border:1px solid #1c1c1c;border-top:0;display:flex;flex-direction:column}
.dtitle{height:27px;background:#3195bb;display:flex;align-items:center;padding:0 6px 0 10px;font-size:18px;letter-spacing:.2px;color:#fff;flex:none;gap:8px}
.dtitle em{font-style:normal;font-weight:700;width:24px;text-align:center;font-size:15px}
.dtitle em.cl{margin-left:-6px}
.dtitle span{margin-right:auto}
.dsearch{display:flex;align-items:center;height:43px;padding:0 11px 0 12px;font-size:15px;flex:none}
.dsearch span{margin:0 8px 0 0}
.dinput{flex:1;height:26px;border:1px solid #cfcfcf;background:#444}
.dcols{display:flex;height:635px;margin-left:14px;flex:none}
.dtree{list-style:none;margin:0;padding:1px 0 0 1px;width:209px;height:635px;border:1px solid #1a1a1a;background:repeating-linear-gradient(#333 0 23px,#262626 23px 24px);background-position:0 1px;font-size:15px}
.dtree li{position:relative;height:24px;line-height:24px;padding-left:20px;color:#eee;white-space:nowrap}
.dtree li::before{content:"";position:absolute;left:9px;top:-12px;width:9px;height:24px;border-left:1px dotted #bbb;border-bottom:1px dotted #bbb}
.dtree li:first-child::before{top:12px;height:0;border-bottom:0;border-top:1px dotted #bbb}
.dtree li.cur{background:linear-gradient(90deg,transparent 19px,#005580 19px 100%);height:23px}
.dtree li.has::after{content:"";position:absolute;left:4px;top:6px;width:11px;height:11px;border:1px solid #eee;background:#333 linear-gradient(#eee,#eee) center/7px 1px no-repeat,linear-gradient(#eee,#eee) center/1px 7px no-repeat}
.dtree li.has::after{background:linear-gradient(#eee,#eee) center/7px 1px no-repeat,linear-gradient(#eee,#eee) center/1px 7px no-repeat,#333}
.dpane{display:flex;margin-left:13px;width:482px;height:635px;border:1px solid #1a1a1a;overflow:hidden}
.dscroll{width:461px;padding-top:1px;overflow:hidden;height:633px}
.vscroll{width:21px;background:#f2f2f2;display:flex;justify-content:center;padding-top:21px}
.vscroll b{display:block;width:6px;height:502px;background:#8a8a8a;margin-left:1px}
.gb{background:#454545;border:1px solid #1f1f1f;margin-bottom:3px}
.gb h4{margin:0;height:26px;display:flex;align-items:center;gap:7px;padding-left:8px;color:#3b9dc3;font-size:15px;font-weight:500}
.gb h4.bold{font-weight:700}
.gb h4::before{content:"";display:block;width:0;height:0;border-left:5.500px solid transparent;border-right:5.500px solid transparent;border-top:7px solid #3b9dc3}
.fr{display:flex;align-items:center;font-size:15px;color:#eee;padding:0 10px 0 9px}
.fr label{margin-right:auto;white-space:nowrap}
.gb1{height:113px}
.gb2{height:355px}
.gb3{height:200px;margin-bottom:0}
.fr-tool{height:32px;margin-top:7px;gap:2px}
.fr-area{height:32px;margin-top:2px;gap:2px}
.fr-area label{margin-top:15px}
.fr-tool label{margin-bottom:4px}
.c-tool{width:131px;height:28px;padding:0 6px 0 5px;margin-bottom:3px;font-size:15px}
.c-tool span{width:101px;font-size:14.500px}
.ibtn{display:flex;align-items:center;justify-content:center;width:32px;height:32px;border:1px solid #bdbdbd}
.ibtn.s{width:24px;height:24px;margin-left:2px;align-self:center}
.ibtn.s:nth-child(2){margin-left:4px}
.ibtn.dash{border:1px dotted #9a9a9a}
.ibtn.o{width:32px;height:32px;border-color:#6a6a6a}
.ibtn.dis{border-color:#6a6a6a}
.fr-c{height:30px}
.gb3 .first{margin-top:7px}
.fc{width:152px;height:27px;flex:none;background:#454545;padding:0 6px 0 4px;font-size:15px}
.fc span{gap:3px}
.i-sp2{width:17px;height:13px}
.mode{height:27px;margin-top:7px}
.inner{margin:6px 10px 0 10px;height:278px;padding:0;background:#454545;border-color:#222}
.pick{display:flex;align-items:stretch;height:32px;margin:7px 8px 0 8px}
.pickmain{width:330px;background:#ffb000;display:flex;align-items:center;color:#222;font-size:15px;padding-left:1px;gap:4px}
.chk{width:15px;height:20px;flex:none}
.orange{display:flex;width:32px;height:32px;background:#ffb000;border:1px solid #ff8c00;align-items:center;justify-content:center;margin-left:2px}
.orig{height:32px;margin-top:2px;padding:0 8px;color:#777}
.addset{height:24px;margin-top:2px;padding:0 8px}
.addbtn{display:flex;width:24px;height:24px;background:#6fb2cc;align-items:center;justify-content:center}
.gb h4.sub{margin:2px 0 0 10px;height:28px;padding-left:6px}
.listwrap{display:flex;margin:7px 0 0 18px;gap:2px}
.dlist{width:372px;height:95px;border:1px solid #111;background:#333;padding:1px 2px 0 1px}
.lr{display:grid;grid-template-columns:53px 1fr;height:24px;border-bottom:1px solid #262626;font-size:15px;color:#fff;line-height:23px}
.lr>div{border-right:1px solid #262626;padding-left:2px}
.lr.sel>div{background:#005580}
.listbtns{display:flex;flex-direction:column;gap:2px}
.lb{display:flex;align-items:center;justify-content:center;width:24px;height:24px;border:1px solid #cfcfcf}
.lb.dis{border-color:#6a6a6a}
.ops{margin:3px 11px 0 12px;height:77px;flex:none}
.ops h4{height:28px}
.opbtns{display:flex;gap:2px;padding:6px 9px 0 286px}
.obtn{display:flex;align-items:center;justify-content:center;width:32px;height:32px;border:1px solid #cfcfcf}
.obtn.dis{border-color:#6a6a6a}
.obtn.last{margin-left:auto}
.white{color:#eee}
.collapse{display:flex;justify-content:center;align-items:center;height:23px;flex:none;border-bottom:1px solid #0f0f0f;margin:0 6px;padding-top:8px}
.dfoot{display:flex;justify-content:flex-end;gap:6px;padding:9px 16px 0 0}
.dfoot button{width:60px;height:28px;background:#333;border:1px solid #3195bb;color:#3195bb;font:15px/1 "Noto Sans CJK SC",sans-serif;padding:0}

/* right rail */
.rrail{background:#3a3a3a;border-left:2px solid #1a1a1a;display:flex;flex-direction:column;align-items:center;padding:14px 0 7px 2px;gap:3.500px}
.gi{width:28px;height:28px}
.railarrow{margin-top:auto;align-self:flex-start;margin-left:8px}

/* status */
.status{background:#333;font-size:14px;font-weight:700;line-height:22px;padding-left:3px;color:#fff;border-top:1px solid #1a1a1a}

/* taskbar */
.taskbar{position:relative;display:flex;align-items:center;background:linear-gradient(90deg,#e2eef9 0,#dfeaf8 35%,#d7e3f8 50%,#d9e3f4 65%,#dce6f3 78%,#e3eef8 100%);border-top:1px solid #cfd4da;color:#111}
.weather{display:flex;width:987px;padding-left:25px;gap:8px;align-items:center}
.wicon{display:flex;position:relative;width:32px;height:32px}
.wicon b{position:absolute;right:-3px;top:-3px;width:19px;height:19px;border-radius:50%;background:#c8281e;color:#fff;font:400 13px/19px "Noto Sans",sans-serif;text-align:center}
.wtxt{display:flex;flex-direction:column;font-size:14px;line-height:20px}
.wsub{color:#555}
.tasks{display:flex;align-items:center;width:596px;gap:0}
.pill{display:flex;align-items:center;width:273px;height:39px;margin-left:17px;border-radius:20px;background:#f3f7fe;border:1px solid #c7d3e6;padding-left:10px;font-size:18px;color:#555;gap:10px;overflow:hidden}
.village{width:64px;height:40px;margin-left:auto;flex:none}
.tk{display:flex;flex-direction:column;align-items:center;justify-content:center;position:relative;height:48px;width:30px;margin-left:25px}
.pill+.tk{margin-left:16px}
.tk.dot::after{content:"";position:absolute;bottom:-2px;width:8px;height:5px;border-radius:3px;background:#6b7279}
.tk.cur{width:48px;background:#f0f4fb;border-radius:4px;margin-left:16px}
.tk.cur::after{content:"";position:absolute;bottom:1px;width:20px;height:4px;border-radius:2px;background:#0a74d8}
.tray{flex:1;display:flex;align-items:center;position:relative;padding-left:619px}
.tr-chev{width:16px;height:10px}
.tr-cloud{width:20px;height:14px;margin-left:21px}
.ime{font-size:18px;width:20px;margin-left:20px;color:#111}
.ime.p{margin-left:29px}
.tr-net{width:20px;height:22px;margin-left:27px}
.tr-snd{width:21px;height:18px;margin-left:9px}
.clock{display:flex;flex-direction:column;align-items:flex-end;font:15px/20px "Noto Sans",sans-serif;width:80px}
.tr-bell{width:16px;height:20px;margin-left:12px}
.wm{position:absolute;right:4px;bottom:3px;font-size:14px;line-height:18px;color:#777;letter-spacing:.900px;white-space:nowrap}
```
